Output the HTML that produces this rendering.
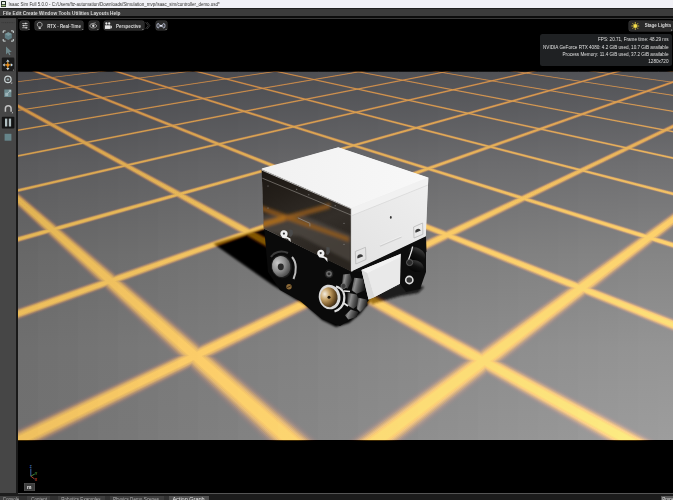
<!DOCTYPE html>
<html><head><meta charset="utf-8"><title>Isaac Sim</title>
<style>
html,body{margin:0;padding:0;background:#000;}
body{width:673px;height:500px;overflow:hidden;position:relative;font-family:"Liberation Sans",sans-serif;}
.abs{position:absolute;}
#scene{position:absolute;left:0;top:0;}
#title{left:0;top:0;width:673px;height:8.1px;background:#f1f1f6;}
#title .t{position:absolute;left:8.4px;top:1.33px;font-size:4.53px;line-height:6px;color:#303030;white-space:nowrap;}
#ticon{position:absolute;left:0.7px;top:0.7px;width:5.6px;height:6.3px;background:#1d2a20;border-radius:0.6px;}
#menu{left:0;top:8.1px;width:673px;height:8.2px;background:#3b3b3b;border-top:1.9px solid #202020;box-sizing:border-box;}
#menu .t{position:absolute;left:2.9px;top:0.1px;font-size:4.71px;line-height:6px;color:#dadada;white-space:nowrap;font-weight:bold;}
#menustrip{left:0;top:16.3px;width:673px;height:1.9px;background:#0c0c0c;}
#vtop{left:17.5px;top:17.6px;width:656px;height:0.7px;background:#383838;}
#ltool{left:0;top:18.2px;width:16.2px;height:474.7px;background:#464646;}
#lborder{left:16.2px;top:18.2px;width:1.5px;height:474.7px;background:#1a1a1a;}
.btn{position:absolute;background:#2a2a2a;border-radius:2px;box-shadow:0 0 0 0.5px #3c3c3c;}
.btxt{position:absolute;font-size:4.45px;line-height:6px;color:#dcdcdc;font-weight:bold;white-space:nowrap;}
#stats{left:540.3px;top:34.4px;width:131.9px;height:31.5px;background:#1f2123;border-radius:2.5px;}
#stats div{position:absolute;right:3.5px;font-size:4.62px;line-height:6px;color:#dedede;white-space:nowrap;text-align:right;}
#bstrip{left:0;top:492.8px;width:673px;height:7.2px;background:#1c1c1c;}
#bline{left:17.7px;top:492.6px;width:656px;height:1px;background:#555;}
.tab{position:absolute;top:495.9px;height:4.1px;background:#3e3e3e;overflow:hidden;}
.tab span{position:absolute;left:2px;top:0.4px;font-size:4.5px;line-height:6px;color:#a8a8a8;white-space:nowrap;}
.gl{mix-blend-mode:screen}
@supports (mix-blend-mode:plus-lighter){.gl{mix-blend-mode:plus-lighter}}
.gm{mix-blend-mode:multiply}

</style></head><body>
<svg id="scene" width="673" height="500" viewBox="0 0 673 500">
<defs>
<clipPath id="floorclip"><rect x="18" y="71.5" width="655" height="369"/></clipPath>
<linearGradient id="fl" x1="0" y1="0" x2="0" y2="1">
<stop offset="0" stop-color="#4d4d4d"/><stop offset="0.16" stop-color="#5a5a5a"/><stop offset="0.32" stop-color="#676767"/><stop offset="0.48" stop-color="#727272"/><stop offset="0.65" stop-color="#7b7b7b"/><stop offset="0.84" stop-color="#838383"/><stop offset="1" stop-color="#898989"/>
</linearGradient>
<linearGradient id="flh" x1="0" y1="0" x2="1" y2="0">
<stop offset="0" stop-color="#000" stop-opacity="0.08"/><stop offset="0.5" stop-color="#000" stop-opacity="0"/><stop offset="0.5" stop-color="#fff" stop-opacity="0"/><stop offset="1" stop-color="#fff" stop-opacity="0.04"/>
</linearGradient>
<filter id="sb" x="150" y="150" width="350" height="250" filterUnits="userSpaceOnUse"><feGaussianBlur stdDeviation="0.8"/></filter>
<filter id="rb" x="200" y="120" width="250" height="200" filterUnits="userSpaceOnUse"><feGaussianBlur stdDeviation="1.6"/></filter>
<clipPath id="lfclip"><polygon points="261.6,169.5 351.3,208.3 351,271.5 263.8,228.6"/></clipPath>
<linearGradient id="lf" gradientUnits="userSpaceOnUse" x1="262" y1="170" x2="300" y2="262"><stop offset="0" stop-color="#1b1713"/><stop offset="0.3" stop-color="#241f1a"/><stop offset="0.7" stop-color="#332e29"/><stop offset="1" stop-color="#2a2520"/></linearGradient>
<linearGradient id="rf" gradientUnits="userSpaceOnUse" x1="352" y1="272" x2="428" y2="178"><stop offset="0" stop-color="#e2e2e2"/><stop offset="1" stop-color="#efefef"/></linearGradient>
<linearGradient id="tf" gradientUnits="userSpaceOnUse" x1="262" y1="170" x2="428" y2="178"><stop offset="0" stop-color="#f1f1f1"/><stop offset="1" stop-color="#f8f8f8"/></linearGradient>
<linearGradient id="rol" x1="0" y1="0" x2="0" y2="1"><stop offset="0" stop-color="#3a3a3a"/><stop offset="0.5" stop-color="#111"/><stop offset="1" stop-color="#050505"/></linearGradient>
<linearGradient id="rol2" x1="0" y1="0" x2="1" y2="0.3"><stop offset="0" stop-color="#2a2a2a"/><stop offset="0.35" stop-color="#8d8d8d"/><stop offset="0.6" stop-color="#5a5a5a"/><stop offset="1" stop-color="#1c1c1c"/></linearGradient>
<radialGradient id="hub1" cx="0.3" cy="0.3" r="0.8"><stop offset="0" stop-color="#f2ece0"/><stop offset="0.35" stop-color="#c9a56a"/><stop offset="0.7" stop-color="#7a5a2c"/><stop offset="1" stop-color="#2a1e10"/></radialGradient>
<radialGradient id="hub2" cx="0.35" cy="0.3" r="0.8"><stop offset="0" stop-color="#c8c8c8"/><stop offset="0.5" stop-color="#8f8f8f"/><stop offset="1" stop-color="#3a3a3a"/></radialGradient>
<linearGradient id="L0" gradientUnits="userSpaceOnUse" x1="0" y1="71.5" x2="0" y2="440"><stop offset="0" stop-color="rgb(3,0,0)"/><stop offset="0.2" stop-color="rgb(3,0,0)"/><stop offset="0.38" stop-color="rgb(3,0,0)"/><stop offset="1" stop-color="rgb(3,0,0)"/></linearGradient><linearGradient id="L1" gradientUnits="userSpaceOnUse" x1="0" y1="71.5" x2="0" y2="440"><stop offset="0" stop-color="rgb(5,1,0)"/><stop offset="0.2" stop-color="rgb(5,1,0)"/><stop offset="0.38" stop-color="rgb(5,1,0)"/><stop offset="1" stop-color="rgb(5,1,0)"/></linearGradient><linearGradient id="L2" gradientUnits="userSpaceOnUse" x1="0" y1="71.5" x2="0" y2="440"><stop offset="0" stop-color="rgb(10,3,0)"/><stop offset="0.2" stop-color="rgb(9,3,0)"/><stop offset="0.38" stop-color="rgb(9,3,0)"/><stop offset="1" stop-color="rgb(9,3,0)"/></linearGradient><linearGradient id="L3" gradientUnits="userSpaceOnUse" x1="0" y1="71.5" x2="0" y2="440"><stop offset="0" stop-color="rgb(15,5,0)"/><stop offset="0.2" stop-color="rgb(14,6,0)"/><stop offset="0.38" stop-color="rgb(14,7,0)"/><stop offset="1" stop-color="rgb(14,7,0)"/></linearGradient><linearGradient id="L4" gradientUnits="userSpaceOnUse" x1="0" y1="71.5" x2="0" y2="440"><stop offset="0" stop-color="rgb(19,9,0)"/><stop offset="0.2" stop-color="rgb(19,10,0)"/><stop offset="0.38" stop-color="rgb(19,11,0)"/><stop offset="1" stop-color="rgb(19,11,0)"/></linearGradient><linearGradient id="L5" gradientUnits="userSpaceOnUse" x1="0" y1="71.5" x2="0" y2="440"><stop offset="0" stop-color="rgb(21,11,0)"/><stop offset="0.2" stop-color="rgb(20,13,0)"/><stop offset="0.38" stop-color="rgb(20,14,0)"/><stop offset="1" stop-color="rgb(20,14,0)"/></linearGradient><linearGradient id="L6" gradientUnits="userSpaceOnUse" x1="0" y1="71.5" x2="0" y2="440"><stop offset="0" stop-color="rgb(20,12,0)"/><stop offset="0.2" stop-color="rgb(20,14,0)"/><stop offset="0.38" stop-color="rgb(20,15,0)"/><stop offset="1" stop-color="rgb(20,15,0)"/></linearGradient><linearGradient id="L7" gradientUnits="userSpaceOnUse" x1="0" y1="71.5" x2="0" y2="440"><stop offset="0" stop-color="rgb(17,11,0)"/><stop offset="0.2" stop-color="rgb(16,13,0)"/><stop offset="0.38" stop-color="rgb(16,14,0)"/><stop offset="1" stop-color="rgb(16,14,0)"/></linearGradient><linearGradient id="L8" gradientUnits="userSpaceOnUse" x1="0" y1="71.5" x2="0" y2="440"><stop offset="0" stop-color="rgb(13,9,0)"/><stop offset="0.2" stop-color="rgb(13,11,0)"/><stop offset="0.38" stop-color="rgb(13,12,0)"/><stop offset="1" stop-color="rgb(13,12,0)"/></linearGradient><linearGradient id="L9" gradientUnits="userSpaceOnUse" x1="0" y1="71.5" x2="0" y2="440"><stop offset="0" stop-color="rgb(12,9,0)"/><stop offset="0.2" stop-color="rgb(12,10,0)"/><stop offset="0.38" stop-color="rgb(12,11,0)"/><stop offset="1" stop-color="rgb(12,11,0)"/></linearGradient><linearGradient id="F0" gradientUnits="userSpaceOnUse" x1="0" y1="71.5" x2="0" y2="440"><stop offset="0.00" stop-color="#45464a"/><stop offset="0.25" stop-color="#5b5b5d"/><stop offset="0.50" stop-color="#686868"/><stop offset="0.75" stop-color="#6f6f6f"/><stop offset="1.00" stop-color="#707070"/></linearGradient><linearGradient id="F1" gradientUnits="userSpaceOnUse" x1="0" y1="71.5" x2="0" y2="440"><stop offset="0.00" stop-color="#46474b"/><stop offset="0.25" stop-color="#5c5c5e"/><stop offset="0.50" stop-color="#6a6a6a"/><stop offset="0.75" stop-color="#717171"/><stop offset="1.00" stop-color="#727272"/></linearGradient><linearGradient id="F2" gradientUnits="userSpaceOnUse" x1="0" y1="71.5" x2="0" y2="440"><stop offset="0.00" stop-color="#46474b"/><stop offset="0.25" stop-color="#5d5d5f"/><stop offset="0.50" stop-color="#6b6b6b"/><stop offset="0.75" stop-color="#727272"/><stop offset="1.00" stop-color="#737373"/></linearGradient><linearGradient id="F3" gradientUnits="userSpaceOnUse" x1="0" y1="71.5" x2="0" y2="440"><stop offset="0.00" stop-color="#47484c"/><stop offset="0.25" stop-color="#5d5d5f"/><stop offset="0.50" stop-color="#6c6c6c"/><stop offset="0.75" stop-color="#747474"/><stop offset="1.00" stop-color="#757575"/></linearGradient><linearGradient id="F4" gradientUnits="userSpaceOnUse" x1="0" y1="71.5" x2="0" y2="440"><stop offset="0.00" stop-color="#48494d"/><stop offset="0.25" stop-color="#5e5e60"/><stop offset="0.50" stop-color="#6d6d6d"/><stop offset="0.75" stop-color="#757575"/><stop offset="1.00" stop-color="#777777"/></linearGradient><linearGradient id="F5" gradientUnits="userSpaceOnUse" x1="0" y1="71.5" x2="0" y2="440"><stop offset="0.00" stop-color="#48494d"/><stop offset="0.25" stop-color="#5f5f61"/><stop offset="0.50" stop-color="#6e6e6e"/><stop offset="0.75" stop-color="#777777"/><stop offset="1.00" stop-color="#787878"/></linearGradient><linearGradient id="F6" gradientUnits="userSpaceOnUse" x1="0" y1="71.5" x2="0" y2="440"><stop offset="0.00" stop-color="#494a4e"/><stop offset="0.25" stop-color="#606062"/><stop offset="0.50" stop-color="#6f6f6f"/><stop offset="0.75" stop-color="#787878"/><stop offset="1.00" stop-color="#7a7a7a"/></linearGradient><linearGradient id="F7" gradientUnits="userSpaceOnUse" x1="0" y1="71.5" x2="0" y2="440"><stop offset="0.00" stop-color="#4a4b4f"/><stop offset="0.25" stop-color="#616163"/><stop offset="0.50" stop-color="#717171"/><stop offset="0.75" stop-color="#797979"/><stop offset="1.00" stop-color="#7c7c7c"/></linearGradient><linearGradient id="F8" gradientUnits="userSpaceOnUse" x1="0" y1="71.5" x2="0" y2="440"><stop offset="0.00" stop-color="#4a4b4f"/><stop offset="0.25" stop-color="#626264"/><stop offset="0.50" stop-color="#727272"/><stop offset="0.75" stop-color="#7b7b7b"/><stop offset="1.00" stop-color="#7d7d7d"/></linearGradient><linearGradient id="F9" gradientUnits="userSpaceOnUse" x1="0" y1="71.5" x2="0" y2="440"><stop offset="0.00" stop-color="#4b4c50"/><stop offset="0.25" stop-color="#636365"/><stop offset="0.50" stop-color="#737373"/><stop offset="0.75" stop-color="#7c7c7c"/><stop offset="1.00" stop-color="#7f7f7f"/></linearGradient><linearGradient id="F10" gradientUnits="userSpaceOnUse" x1="0" y1="71.5" x2="0" y2="440"><stop offset="0.00" stop-color="#4b4c50"/><stop offset="0.25" stop-color="#636365"/><stop offset="0.50" stop-color="#747474"/><stop offset="0.75" stop-color="#7d7d7d"/><stop offset="1.00" stop-color="#808080"/></linearGradient><linearGradient id="F11" gradientUnits="userSpaceOnUse" x1="0" y1="71.5" x2="0" y2="440"><stop offset="0.00" stop-color="#4c4d51"/><stop offset="0.25" stop-color="#646466"/><stop offset="0.50" stop-color="#757575"/><stop offset="0.75" stop-color="#7f7f7f"/><stop offset="1.00" stop-color="#828282"/></linearGradient><linearGradient id="F12" gradientUnits="userSpaceOnUse" x1="0" y1="71.5" x2="0" y2="440"><stop offset="0.00" stop-color="#4c4d51"/><stop offset="0.25" stop-color="#656567"/><stop offset="0.50" stop-color="#767676"/><stop offset="0.75" stop-color="#808080"/><stop offset="1.00" stop-color="#838383"/></linearGradient><linearGradient id="F13" gradientUnits="userSpaceOnUse" x1="0" y1="71.5" x2="0" y2="440"><stop offset="0.00" stop-color="#4d4e52"/><stop offset="0.25" stop-color="#666668"/><stop offset="0.50" stop-color="#777777"/><stop offset="0.75" stop-color="#818181"/><stop offset="1.00" stop-color="#858585"/></linearGradient><linearGradient id="F14" gradientUnits="userSpaceOnUse" x1="0" y1="71.5" x2="0" y2="440"><stop offset="0.00" stop-color="#4d4e52"/><stop offset="0.25" stop-color="#666668"/><stop offset="0.50" stop-color="#787878"/><stop offset="0.75" stop-color="#828282"/><stop offset="1.00" stop-color="#868686"/></linearGradient><linearGradient id="F15" gradientUnits="userSpaceOnUse" x1="0" y1="71.5" x2="0" y2="440"><stop offset="0.00" stop-color="#4e4f53"/><stop offset="0.25" stop-color="#676769"/><stop offset="0.50" stop-color="#797979"/><stop offset="0.75" stop-color="#848484"/><stop offset="1.00" stop-color="#888888"/></linearGradient><linearGradient id="F16" gradientUnits="userSpaceOnUse" x1="0" y1="71.5" x2="0" y2="440"><stop offset="0.00" stop-color="#4e4f53"/><stop offset="0.25" stop-color="#68686a"/><stop offset="0.50" stop-color="#7a7a7a"/><stop offset="0.75" stop-color="#858585"/><stop offset="1.00" stop-color="#898989"/></linearGradient><linearGradient id="F17" gradientUnits="userSpaceOnUse" x1="0" y1="71.5" x2="0" y2="440"><stop offset="0.00" stop-color="#4e4f53"/><stop offset="0.25" stop-color="#68686a"/><stop offset="0.50" stop-color="#7a7a7a"/><stop offset="0.75" stop-color="#868686"/><stop offset="1.00" stop-color="#8b8b8b"/></linearGradient><linearGradient id="F18" gradientUnits="userSpaceOnUse" x1="0" y1="71.5" x2="0" y2="440"><stop offset="0.00" stop-color="#4f5054"/><stop offset="0.25" stop-color="#69696b"/><stop offset="0.50" stop-color="#7b7b7b"/><stop offset="0.75" stop-color="#878787"/><stop offset="1.00" stop-color="#8c8c8c"/></linearGradient><linearGradient id="F19" gradientUnits="userSpaceOnUse" x1="0" y1="71.5" x2="0" y2="440"><stop offset="0.00" stop-color="#4f5054"/><stop offset="0.25" stop-color="#69696b"/><stop offset="0.50" stop-color="#7c7c7c"/><stop offset="0.75" stop-color="#888888"/><stop offset="1.00" stop-color="#8d8d8d"/></linearGradient><linearGradient id="F20" gradientUnits="userSpaceOnUse" x1="0" y1="71.5" x2="0" y2="440"><stop offset="0.00" stop-color="#4f5054"/><stop offset="0.25" stop-color="#6a6a6c"/><stop offset="0.50" stop-color="#7d7d7d"/><stop offset="0.75" stop-color="#898989"/><stop offset="1.00" stop-color="#8f8f8f"/></linearGradient><linearGradient id="F21" gradientUnits="userSpaceOnUse" x1="0" y1="71.5" x2="0" y2="440"><stop offset="0.00" stop-color="#505155"/><stop offset="0.25" stop-color="#6b6b6d"/><stop offset="0.50" stop-color="#7e7e7e"/><stop offset="0.75" stop-color="#8a8a8a"/><stop offset="1.00" stop-color="#909090"/></linearGradient><linearGradient id="F22" gradientUnits="userSpaceOnUse" x1="0" y1="71.5" x2="0" y2="440"><stop offset="0.00" stop-color="#505155"/><stop offset="0.25" stop-color="#6b6b6d"/><stop offset="0.50" stop-color="#7f7f7f"/><stop offset="0.75" stop-color="#8b8b8b"/><stop offset="1.00" stop-color="#919191"/></linearGradient><linearGradient id="F23" gradientUnits="userSpaceOnUse" x1="0" y1="71.5" x2="0" y2="440"><stop offset="0.00" stop-color="#505155"/><stop offset="0.25" stop-color="#6c6c6e"/><stop offset="0.50" stop-color="#7f7f7f"/><stop offset="0.75" stop-color="#8c8c8c"/><stop offset="1.00" stop-color="#939393"/></linearGradient><linearGradient id="F24" gradientUnits="userSpaceOnUse" x1="0" y1="71.5" x2="0" y2="440"><stop offset="0.00" stop-color="#505155"/><stop offset="0.25" stop-color="#6c6c6e"/><stop offset="0.50" stop-color="#808080"/><stop offset="0.75" stop-color="#8d8d8d"/><stop offset="1.00" stop-color="#949494"/></linearGradient><linearGradient id="F25" gradientUnits="userSpaceOnUse" x1="0" y1="71.5" x2="0" y2="440"><stop offset="0.00" stop-color="#515256"/><stop offset="0.25" stop-color="#6c6c6e"/><stop offset="0.50" stop-color="#818181"/><stop offset="0.75" stop-color="#8e8e8e"/><stop offset="1.00" stop-color="#959595"/></linearGradient><linearGradient id="F26" gradientUnits="userSpaceOnUse" x1="0" y1="71.5" x2="0" y2="440"><stop offset="0.00" stop-color="#515256"/><stop offset="0.25" stop-color="#6d6d6f"/><stop offset="0.50" stop-color="#818181"/><stop offset="0.75" stop-color="#8f8f8f"/><stop offset="1.00" stop-color="#969696"/></linearGradient><linearGradient id="F27" gradientUnits="userSpaceOnUse" x1="0" y1="71.5" x2="0" y2="440"><stop offset="0.00" stop-color="#515256"/><stop offset="0.25" stop-color="#6d6d6f"/><stop offset="0.50" stop-color="#828282"/><stop offset="0.75" stop-color="#909090"/><stop offset="1.00" stop-color="#979797"/></linearGradient><linearGradient id="F28" gradientUnits="userSpaceOnUse" x1="0" y1="71.5" x2="0" y2="440"><stop offset="0.00" stop-color="#515256"/><stop offset="0.25" stop-color="#6e6e70"/><stop offset="0.50" stop-color="#838383"/><stop offset="0.75" stop-color="#919191"/><stop offset="1.00" stop-color="#999999"/></linearGradient><linearGradient id="F29" gradientUnits="userSpaceOnUse" x1="0" y1="71.5" x2="0" y2="440"><stop offset="0.00" stop-color="#515256"/><stop offset="0.25" stop-color="#6e6e70"/><stop offset="0.50" stop-color="#838383"/><stop offset="0.75" stop-color="#929292"/><stop offset="1.00" stop-color="#9a9a9a"/></linearGradient><linearGradient id="F30" gradientUnits="userSpaceOnUse" x1="0" y1="71.5" x2="0" y2="440"><stop offset="0.00" stop-color="#515256"/><stop offset="0.25" stop-color="#6e6e70"/><stop offset="0.50" stop-color="#848484"/><stop offset="0.75" stop-color="#939393"/><stop offset="1.00" stop-color="#9b9b9b"/></linearGradient><linearGradient id="F31" gradientUnits="userSpaceOnUse" x1="0" y1="71.5" x2="0" y2="440"><stop offset="0.00" stop-color="#515256"/><stop offset="0.25" stop-color="#6f6f71"/><stop offset="0.50" stop-color="#858585"/><stop offset="0.75" stop-color="#949494"/><stop offset="1.00" stop-color="#9c9c9c"/></linearGradient><linearGradient id="F32" gradientUnits="userSpaceOnUse" x1="0" y1="71.5" x2="0" y2="440"><stop offset="0.00" stop-color="#515256"/><stop offset="0.25" stop-color="#6f6f71"/><stop offset="0.50" stop-color="#858585"/><stop offset="0.75" stop-color="#949494"/><stop offset="1.00" stop-color="#9d9d9d"/></linearGradient></defs>
<g clip-path="url(#floorclip)">
<rect x="18" y="71.5" width="20.6" height="368.5" fill="url(#F0)"/><rect x="38" y="71.5" width="20.6" height="368.5" fill="url(#F1)"/><rect x="58" y="71.5" width="20.6" height="368.5" fill="url(#F2)"/><rect x="78" y="71.5" width="20.6" height="368.5" fill="url(#F3)"/><rect x="98" y="71.5" width="20.6" height="368.5" fill="url(#F4)"/><rect x="118" y="71.5" width="20.6" height="368.5" fill="url(#F5)"/><rect x="138" y="71.5" width="20.6" height="368.5" fill="url(#F6)"/><rect x="158" y="71.5" width="20.6" height="368.5" fill="url(#F7)"/><rect x="178" y="71.5" width="20.6" height="368.5" fill="url(#F8)"/><rect x="198" y="71.5" width="20.6" height="368.5" fill="url(#F9)"/><rect x="218" y="71.5" width="20.6" height="368.5" fill="url(#F10)"/><rect x="238" y="71.5" width="20.6" height="368.5" fill="url(#F11)"/><rect x="258" y="71.5" width="20.6" height="368.5" fill="url(#F12)"/><rect x="278" y="71.5" width="20.6" height="368.5" fill="url(#F13)"/><rect x="298" y="71.5" width="20.6" height="368.5" fill="url(#F14)"/><rect x="318" y="71.5" width="20.6" height="368.5" fill="url(#F15)"/><rect x="338" y="71.5" width="20.6" height="368.5" fill="url(#F16)"/><rect x="358" y="71.5" width="20.6" height="368.5" fill="url(#F17)"/><rect x="378" y="71.5" width="20.6" height="368.5" fill="url(#F18)"/><rect x="398" y="71.5" width="20.6" height="368.5" fill="url(#F19)"/><rect x="418" y="71.5" width="20.6" height="368.5" fill="url(#F20)"/><rect x="438" y="71.5" width="20.6" height="368.5" fill="url(#F21)"/><rect x="458" y="71.5" width="20.6" height="368.5" fill="url(#F22)"/><rect x="478" y="71.5" width="20.6" height="368.5" fill="url(#F23)"/><rect x="498" y="71.5" width="20.6" height="368.5" fill="url(#F24)"/><rect x="518" y="71.5" width="20.6" height="368.5" fill="url(#F25)"/><rect x="538" y="71.5" width="20.6" height="368.5" fill="url(#F26)"/><rect x="558" y="71.5" width="20.6" height="368.5" fill="url(#F27)"/><rect x="578" y="71.5" width="20.6" height="368.5" fill="url(#F28)"/><rect x="598" y="71.5" width="20.6" height="368.5" fill="url(#F29)"/><rect x="618" y="71.5" width="20.6" height="368.5" fill="url(#F30)"/><rect x="638" y="71.5" width="20.6" height="368.5" fill="url(#F31)"/><rect x="658" y="71.5" width="15.6" height="368.5" fill="url(#F32)"/>
<!-- shadow -->
<g filter="url(#sb)">
<polygon points="213.5,243.8 263.5,228.6 300,235 366,272 372,299 360,314 349,323 336,327 322,320 305,305 272.5,285" fill="#060606"/>
<polygon points="368,297 405,281 424,287 418,293 400,296 372,304" fill="#1a1a1a"/>
</g>
<g fill="url(#L0)" class="gl"><polygon points="-216.0,-6.2 -75.2,122.4 -26.4,166.9 16.4,207.3 79.3,266.8 180.8,362.8 345.9,518.8 481.2,645.1 738.8,885.3 761.6,811.2 514.1,603.4 379.8,490.7 209.1,349.2 101.0,259.7 32.9,203.2 -13.9,164.4 -64.8,120.8 -213.2,-6.3"/><polygon points="-23.0,86.3 42.2,122.7 122.0,167.3 193.0,207.8 297.4,267.4 465.9,363.6 739.9,519.9 963.4,646.4 1388.7,887.2 1359.5,812.9 967.1,604.7 754.1,491.8 484.6,350.0 314.1,260.3 206.7,203.7 132.7,164.8 51.4,121.2 -23.0,81.2"/><polygon points="-23.0,49.5 159.5,123.0 270.4,167.7 369.6,208.3 515.5,268.0 751.1,364.4 1134.0,521.0 1445.6,647.8 2038.6,889.0 1957.4,814.6 1420.0,606.0 1128.5,492.9 760.2,350.8 527.2,260.9 380.4,204.2 279.3,165.2 167.6,121.5 -23.0,46.8"/><polygon points="-19.2,30.0 276.8,123.4 418.8,168.1 546.3,208.8 733.7,268.6 1036.2,365.2 1528.0,522.2 1927.8,649.2 2688.5,890.9 2555.4,816.3 1873.0,607.3 1502.8,493.9 1035.8,351.5 740.4,261.5 554.1,204.7 426.0,165.6 283.9,121.8 -13.8,30.0"/><polygon points="32.8,30.0 394.2,123.7 567.2,168.6 722.9,209.3 951.8,269.3 1321.3,366.0 1922.0,523.3 2409.9,650.5 3338.3,892.7 3153.3,818.0 2326.0,608.6 1877.1,495.0 1311.3,352.3 953.5,262.1 727.8,205.2 572.6,166.1 400.1,122.1 38.1,30.0"/><polygon points="84.5,30.0 511.5,124.0 715.6,169.0 899.5,209.8 1169.9,269.9 1606.4,366.8 2316.1,524.4 2892.1,651.9 3988.2,894.6 3751.2,819.7 2778.9,609.9 2251.4,496.0 1586.9,353.1 1166.6,262.7 901.6,205.7 719.2,166.5 516.3,122.5 89.9,30.0"/><polygon points="136.1,30.0 628.8,124.4 864.0,169.4 1076.2,210.3 1388.1,270.5 1891.6,367.6 2710.1,525.5 3374.3,653.3 4638.1,896.4 4349.1,821.4 3231.9,611.2 2625.7,497.1 1862.5,353.9 1379.7,263.3 1075.3,206.2 865.9,166.9 632.6,122.8 141.4,30.0"/><polygon points="187.4,30.0 746.2,124.7 1012.4,169.8 1252.8,210.8 1606.2,271.1 2176.7,368.4 3104.2,526.6 3856.4,654.7 5288.0,898.3 4947.0,823.1 3684.8,612.5 3000.0,498.2 2138.0,354.7 1592.8,263.9 1249.0,206.7 1012.5,167.3 748.8,123.1 192.8,30.0"/><polygon points="238.6,30.0 863.5,125.0 1160.8,170.3 1429.4,211.3 1824.3,271.7 2461.8,369.3 3498.2,527.8 4338.6,656.0 5937.8,900.1 5544.9,824.8 4137.8,613.7 3374.3,499.2 2413.6,355.5 1805.9,264.5 1422.8,207.2 1159.1,167.7 865.0,123.5 243.9,30.0"/><polygon points="289.6,30.0 980.8,125.4 1309.2,170.7 1606.0,211.9 2042.4,272.4 2746.9,370.1 3892.2,528.9 4820.8,657.4 6587.7,902.0 6142.8,826.5 4590.8,615.0 3748.7,500.3 2689.2,356.3 2019.0,265.1 1596.5,207.7 1305.8,168.2 981.2,123.8 294.8,30.0"/><polygon points="340.3,30.0 1098.2,125.7 1457.5,171.1 1782.7,212.4 2260.6,273.0 3032.0,370.9 4286.3,530.0 5302.9,658.8 7237.6,903.8 6740.7,828.2 5043.7,616.3 4123.0,501.4 2964.8,357.0 2232.1,265.7 1770.2,208.2 1452.4,168.6 1097.5,124.1 345.6,30.0"/><polygon points="-6427.3,789.1 -4623.6,587.9 -3644.3,478.6 -2412.0,341.4 -1631.9,254.6 -1139.9,199.8 -801.3,162.1 -423.0,119.8 379.4,30.0 385.2,30.0 -424.6,121.4 -808.2,164.7 -1155.4,204.1 -1665.9,262.0 -2490.3,355.5 -3831.6,507.6 -4919.2,630.8 -6990.7,865.3"/><polygon points="-5801.4,790.8 -4149.2,589.2 -3252.1,479.7 -2123.2,342.2 -1408.5,255.2 -957.8,200.3 -647.6,162.5 -301.1,120.1 435.0,30.0 440.7,30.0 -301.5,121.8 -652.5,165.2 -970.0,204.6 -1437.0,262.7 -2191.0,356.4 -3417.8,508.8 -4412.7,632.2 -6307.7,867.3"/><polygon points="-5175.5,792.6 -3674.8,590.6 -2860.0,480.9 -1834.4,343.1 -1185.1,255.8 -775.7,200.8 -493.8,163.0 -179.2,120.5 490.3,30.0 496.0,30.0 -178.4,122.1 -496.8,165.6 -784.7,205.2 -1208.0,263.3 -1891.7,357.2 -3004.0,510.0 -3906.2,633.7 -5624.6,869.2"/><polygon points="-4549.6,794.4 -3200.4,591.9 -2467.9,482.0 -1545.6,343.9 -961.7,256.5 -593.5,201.4 -340.1,163.4 -57.4,120.8 545.3,30.0 551.1,30.0 -55.3,122.5 -341.1,166.0 -599.4,205.7 -979.1,264.0 -1592.4,358.1 -2590.1,511.2 -3399.7,635.1 -4941.5,871.1"/><polygon points="-3923.7,796.2 -2726.1,593.3 -2075.8,483.1 -1256.8,344.7 -738.4,257.1 -411.4,201.9 -186.3,163.8 64.5,121.2 600.2,30.0 605.9,30.0 67.7,122.8 -185.4,166.5 -414.1,206.2 -750.2,264.6 -1293.1,358.9 -2176.3,512.4 -2893.1,636.5 -4258.4,873.1"/><polygon points="-3297.8,798.0 -2251.7,594.6 -1683.7,484.2 -968.0,345.5 -515.0,257.7 -229.2,202.4 -32.6,164.3 186.4,121.5 654.8,30.0 660.5,30.0 190.8,123.2 -29.7,166.9 -228.7,206.7 -521.3,265.3 -993.8,359.8 -1762.5,513.5 -2386.6,638.0 -3575.4,875.0"/><polygon points="-2671.9,799.7 -1777.3,596.0 -1291.5,485.3 -679.2,346.3 -291.6,258.4 -47.1,202.9 121.2,164.7 308.3,121.8 709.2,30.0 714.0,30.2 313.9,123.5 126.0,167.4 -43.4,207.3 -292.4,265.9 -694.5,360.6 -1348.7,514.7 -1880.1,639.4 -2892.3,877.0"/><polygon points="-2046.0,801.5 -1302.9,597.3 -899.4,486.4 -390.4,347.2 -68.2,259.0 135.0,203.4 274.9,165.2 430.1,122.2 714.0,43.6 714.0,45.5 437.0,123.9 281.6,167.8 141.9,207.8 -63.5,266.6 -395.2,361.5 -934.8,515.9 -1373.6,640.9 -2209.2,878.9"/><polygon points="-1420.1,803.3 -828.5,598.7 -507.3,487.5 -101.6,348.0 155.2,259.7 317.2,203.9 428.7,165.6 552.0,122.5 714.0,66.0 714.0,69.0 560.1,124.2 437.3,168.3 327.3,208.3 165.5,267.2 -95.9,362.3 -521.0,517.1 -867.1,642.3 -1526.1,880.9"/><polygon points="-794.2,805.1 -354.1,600.0 -115.2,488.7 187.2,348.8 378.6,260.3 499.3,204.5 582.4,166.0 673.9,122.9 714.0,104.0 714.0,109.5 683.2,124.6 593.0,168.7 512.6,208.8 394.4,267.9 203.4,363.2 -107.2,518.2 -360.5,643.8 -843.1,882.8"/><polygon points="-168.3,806.9 120.3,601.4 276.9,489.8 476.0,349.6 602.0,260.9 681.5,205.0 736.2,166.5 795.8,123.2 966.0,-0.2 969.1,-0.1 806.3,124.9 748.7,169.1 697.9,209.4 623.3,268.5 502.8,364.0 306.6,519.4 146.0,645.2 -160.0,884.7"/></g>
<g fill="url(#L1)" class="gl"><polygon points="-215.9,-6.2 -74.8,122.3 -25.9,166.8 17.0,207.2 80.1,266.5 181.9,362.2 347.3,517.7 482.6,643.4 739.8,882.2 760.8,813.8 512.9,604.9 378.6,491.8 208.0,349.7 100.2,259.9 32.3,203.4 -14.4,164.5 -65.2,120.9 -213.3,-6.3"/><polygon points="-23.0,86.1 42.5,122.6 122.4,167.2 193.6,207.7 298.1,267.1 466.7,363.0 740.5,518.8 963.6,644.7 1387.5,884.1 1360.6,815.5 966.9,606.2 753.6,492.8 483.9,350.5 313.5,260.5 206.1,203.9 132.3,164.9 51.1,121.2 -23.0,81.4"/><polygon points="-23.0,49.4 159.8,123.0 270.7,167.6 370.1,208.2 516.0,267.7 751.4,363.8 1133.7,519.9 1444.5,646.1 2035.2,885.9 1960.3,817.2 1421.0,607.5 1128.7,493.9 759.9,351.3 526.8,261.2 380.0,204.4 279.0,165.3 167.3,121.5 -23.0,46.9"/><polygon points="-19.0,30.0 277.1,123.3 419.1,168.1 546.6,208.7 733.9,268.4 1036.2,364.7 1527.0,521.0 1925.5,647.5 2682.9,887.8 2560.1,818.9 1875.0,608.8 1503.7,495.0 1035.8,352.1 740.1,261.8 553.8,204.9 425.7,165.7 283.6,121.9 -14.0,30.0"/><polygon points="33.0,30.0 394.4,123.6 567.4,168.5 723.1,209.2 951.9,269.0 1320.9,365.5 1920.2,522.1 2406.5,648.8 3330.6,889.6 3159.8,820.6 2329.0,610.1 1878.7,496.0 1311.7,352.8 953.4,262.4 727.7,205.4 572.4,166.2 399.9,122.2 37.9,30.0"/><polygon points="84.7,30.0 511.7,124.0 715.7,168.9 899.6,209.7 1169.8,269.6 1605.7,366.3 2313.5,523.3 2887.5,650.2 3978.3,891.5 3759.6,822.3 2783.0,611.4 2253.8,497.1 1587.6,353.6 1166.7,263.0 901.5,205.9 719.1,166.6 516.1,122.5 89.7,30.0"/><polygon points="136.3,30.0 629.0,124.3 864.0,169.3 1076.1,210.2 1387.7,270.2 1890.4,367.1 2706.7,524.4 3368.4,651.6 4626.0,893.3 4359.3,824.0 3237.0,612.7 2628.8,498.2 1863.6,354.4 1380.0,263.6 1075.3,206.4 865.8,167.0 632.4,122.9 141.2,30.0"/><polygon points="187.6,30.0 746.3,124.7 1012.4,169.7 1252.6,210.7 1605.7,270.8 2175.1,367.9 3100.0,525.5 3849.4,652.9 5273.8,895.1 4959.1,825.7 3691.0,614.0 3003.8,499.2 2139.5,355.2 1593.3,264.2 1249.2,206.8 1012.5,167.4 748.7,123.2 192.6,30.0"/><polygon points="238.8,30.0 863.6,125.0 1160.7,170.2 1429.2,211.2 1823.6,271.5 2459.9,368.7 3493.2,526.6 4330.4,654.3 5921.5,897.0 5558.9,827.5 4145.1,615.3 3378.9,500.3 2415.4,356.0 1806.6,264.8 1423.0,207.3 1159.2,167.8 865.0,123.5 243.7,30.0"/><polygon points="289.8,30.0 980.8,125.3 1309.0,170.6 1605.7,211.7 2041.5,272.1 2744.6,369.5 3886.4,527.7 4811.4,655.7 6569.2,898.8 6158.6,829.2 4599.1,616.6 3753.9,501.4 2691.3,356.8 2019.9,265.4 1596.8,207.8 1305.9,168.2 981.2,123.9 294.6,30.0"/><polygon points="340.5,30.0 1098.1,125.7 1457.3,171.0 1782.2,212.2 2259.5,272.7 3029.4,370.3 4279.7,528.9 5292.3,657.0 7216.9,900.7 6758.4,830.9 5053.1,617.9 4128.9,502.4 2967.3,357.6 2233.2,266.0 1770.7,208.3 1452.6,168.7 1097.5,124.2 345.4,30.0"/><polygon points="-6447.2,791.8 -4634.3,589.4 -3651.1,479.7 -2414.9,341.9 -1633.2,254.8 -1140.5,200.0 -801.6,162.2 -423.1,119.8 379.7,30.0 385.0,30.0 -424.6,121.4 -807.9,164.6 -1154.8,203.9 -1664.5,261.7 -2487.2,354.9 -3824.0,506.5 -4907.1,629.0 -6967.2,862.1"/><polygon points="-5819.3,793.5 -4158.7,590.8 -3258.2,480.8 -2125.7,342.8 -1409.6,255.5 -958.3,200.5 -647.8,162.6 -301.1,120.2 435.2,30.0 440.5,30.0 -301.5,121.7 -652.3,165.1 -969.6,204.5 -1435.8,262.4 -2188.3,355.8 -3411.1,507.6 -4401.9,630.5 -6286.5,864.1"/><polygon points="-5191.4,795.3 -3683.2,592.1 -2865.3,481.9 -1836.5,343.6 -1186.0,256.1 -776.0,201.0 -494.0,163.1 -179.2,120.5 490.5,30.0 495.8,30.0 -178.5,122.1 -496.7,165.5 -784.4,205.0 -1207.1,263.0 -1889.4,356.6 -2998.1,508.8 -3896.7,631.9 -5605.8,866.0"/><polygon points="-4563.4,797.1 -3207.6,593.5 -2472.4,483.0 -1547.3,344.4 -962.4,256.8 -593.7,201.5 -340.1,163.5 -57.3,120.9 545.6,30.0 550.8,30.0 -55.4,122.4 -341.1,165.9 -599.2,205.5 -978.4,263.7 -1590.5,357.5 -2585.2,510.0 -3391.5,633.3 -4925.1,867.9"/><polygon points="-3935.5,798.9 -2732.1,594.8 -2079.5,484.2 -1258.1,345.2 -738.8,257.4 -411.5,202.0 -186.3,163.9 64.6,121.2 600.4,30.0 605.7,30.0 67.6,122.8 -185.5,166.4 -413.9,206.0 -749.7,264.3 -1291.6,358.3 -2172.2,511.2 -2886.3,634.8 -4244.4,869.9"/><polygon points="-3307.6,800.7 -2256.5,596.2 -1686.5,485.3 -968.9,346.1 -515.2,258.0 -229.2,202.6 -32.5,164.4 186.6,121.6 655.0,30.0 660.2,30.0 190.7,123.1 -29.8,166.8 -228.7,206.6 -521.0,265.0 -992.7,359.2 -1759.3,512.3 -2381.1,636.2 -3563.7,871.8"/><polygon points="-2679.7,802.5 -1781.0,597.5 -1293.6,486.4 -679.8,346.9 -291.6,258.7 -47.0,203.1 121.3,164.8 308.5,121.9 709.4,30.0 714.0,30.1 313.7,123.5 125.8,167.3 -43.5,207.1 -292.3,265.6 -693.9,360.0 -1346.4,513.5 -1875.9,637.6 -2883.1,873.7"/><polygon points="-2051.8,804.3 -1305.4,598.9 -900.7,487.5 -390.6,347.7 -68.0,259.3 135.3,203.6 275.2,165.3 430.4,122.3 714.0,43.7 714.0,45.5 436.8,123.8 281.4,167.7 141.7,207.6 -63.6,266.3 -395.0,360.9 -933.4,514.7 -1370.7,639.1 -2202.4,875.7"/><polygon points="-1423.9,806.0 -829.9,600.2 -507.8,488.6 -101.4,348.5 155.6,259.9 317.6,204.1 429.0,165.7 552.3,122.6 714.0,66.1 714.0,68.9 559.8,124.2 437.0,168.2 326.9,208.1 165.1,266.9 -96.1,361.7 -520.5,515.9 -865.5,640.5 -1521.7,877.6"/><polygon points="-795.9,807.8 -354.4,601.6 -114.9,489.7 187.8,349.3 379.2,260.6 499.8,204.6 582.8,166.1 674.3,123.0 714.0,104.2 714.0,109.3 682.9,124.5 592.6,168.6 512.1,208.7 393.8,267.6 202.8,362.6 -107.5,517.0 -360.3,642.0 -841.0,879.6"/><polygon points="-168.0,809.6 121.2,602.9 278.0,490.9 477.0,350.2 602.8,261.2 682.1,205.1 736.6,166.6 796.2,123.3 966.1,-0.2 969.0,-0.1 805.9,124.9 748.2,169.0 697.3,209.2 622.5,268.2 501.7,363.4 305.4,518.2 144.9,643.4 -160.3,881.5"/></g>
<g fill="url(#L2)" class="gl"><polygon points="-215.8,-6.2 -74.4,122.3 -25.4,166.7 17.7,207.0 81.0,266.2 183.1,361.7 348.6,516.5 483.9,641.7 740.7,879.2 760.0,816.5 511.7,606.5 377.3,492.8 207.0,350.2 99.4,260.2 31.7,203.5 -14.9,164.6 -65.6,120.9 -213.5,-6.3"/><polygon points="-23.0,85.9 42.9,122.6 122.8,167.1 194.1,207.5 298.7,266.8 467.4,362.5 741.1,517.7 963.7,643.0 1386.3,881.0 1361.6,818.2 966.8,607.8 753.1,493.9 483.2,351.0 312.9,260.8 205.6,204.0 131.9,165.0 50.7,121.3 -23.0,81.6"/><polygon points="-23.0,49.3 160.1,122.9 271.1,167.5 370.5,208.0 516.5,267.5 751.8,363.3 1133.5,518.8 1443.5,644.4 2031.8,882.8 1963.2,819.9 1421.9,609.0 1128.9,494.9 759.5,351.8 526.4,261.4 379.6,204.5 278.7,165.4 167.0,121.6 -23.0,47.0"/><polygon points="-18.8,30.0 277.4,123.3 419.3,168.0 546.9,208.5 734.2,268.1 1036.2,364.1 1526.0,519.9 1923.3,645.8 2677.4,884.7 2564.8,821.6 1877.0,610.3 1504.6,496.0 1035.8,352.6 739.9,262.0 553.5,205.0 425.4,165.8 283.3,121.9 -14.2,30.0"/><polygon points="33.2,30.0 394.6,123.6 567.6,168.4 723.3,209.0 951.9,268.7 1320.5,364.9 1918.4,521.0 2403.1,647.1 3323.0,886.5 3166.4,823.3 2332.0,611.6 1880.4,497.1 1312.1,353.4 953.3,262.6 727.5,205.5 572.2,166.3 399.6,122.3 37.7,30.0"/><polygon points="84.9,30.0 511.9,123.9 715.9,168.8 899.7,209.5 1169.7,269.3 1604.9,365.7 2310.9,522.1 2882.9,648.5 3968.5,888.4 3768.1,825.0 2787.1,612.9 2256.1,498.1 1588.4,354.1 1166.8,263.2 901.4,206.0 719.0,166.7 516.0,122.6 89.5,30.0"/><polygon points="136.5,30.0 629.1,124.3 864.1,169.2 1076.1,210.0 1387.4,269.9 1889.2,366.5 2703.3,523.2 3362.7,649.9 4614.1,890.2 4369.7,826.7 3242.2,614.2 2631.9,499.2 1864.6,354.9 1380.3,263.9 1075.4,206.5 865.7,167.1 632.3,122.9 141.0,30.0"/><polygon points="187.9,30.0 746.4,124.6 1012.4,169.6 1252.5,210.5 1605.1,270.6 2173.6,367.3 3095.8,524.4 3842.4,651.2 5259.6,892.0 4971.3,828.4 3697.3,615.5 3007.7,500.3 2140.9,355.7 1593.8,264.5 1249.3,207.0 1012.5,167.5 748.6,123.3 192.4,30.0"/><polygon points="239.0,30.0 863.6,124.9 1160.6,170.1 1428.9,211.0 1822.9,271.2 2458.0,368.2 3488.2,525.5 4322.2,652.6 5905.2,893.9 5572.9,830.1 4152.4,616.8 3383.4,501.3 2417.2,356.5 1807.3,265.1 1423.3,207.5 1159.3,167.9 864.9,123.6 243.5,30.0"/><polygon points="290.0,30.0 980.9,125.3 1308.9,170.5 1605.3,211.5 2040.6,271.8 2742.3,369.0 3880.7,526.6 4802.0,654.0 6550.8,895.7 6174.5,831.9 4607.5,618.1 3759.2,502.4 2693.5,357.3 2020.8,265.7 1597.2,208.0 1306.0,168.3 981.2,123.9 294.4,30.0"/><polygon points="340.7,30.0 1098.1,125.6 1457.1,170.9 1781.7,212.0 2258.3,272.4 3026.7,369.8 4273.1,527.7 5281.8,655.3 7196.3,897.5 6776.1,833.6 5062.5,619.4 4135.0,503.5 2969.8,358.1 2234.2,266.3 1771.2,208.5 1452.8,168.8 1097.5,124.3 345.2,30.0"/><polygon points="-6467.3,794.5 -4645.0,591.0 -3658.0,480.7 -2417.8,342.5 -1634.5,255.1 -1141.1,200.1 -801.9,162.3 -423.1,119.9 379.9,30.0 384.8,30.0 -424.5,121.3 -807.7,164.5 -1154.2,203.8 -1663.2,261.4 -2484.1,354.4 -3816.5,505.3 -4895.1,627.3 -6943.8,859.0"/><polygon points="-5837.3,796.3 -4168.3,592.3 -3264.3,481.9 -2128.2,343.3 -1410.7,255.8 -958.7,200.6 -648.0,162.7 -301.1,120.2 435.4,30.0 440.3,30.0 -301.5,121.6 -652.1,165.0 -969.1,204.3 -1434.7,262.1 -2185.6,355.2 -3404.4,506.5 -4391.2,628.7 -6265.4,860.9"/><polygon points="-5207.3,798.1 -3691.6,593.7 -2870.6,483.0 -1838.6,344.1 -1186.9,256.4 -776.4,201.2 -494.1,163.2 -179.2,120.6 490.7,30.0 495.6,30.0 -178.5,122.0 -496.6,165.4 -784.0,204.8 -1206.2,262.7 -1887.1,356.1 -2992.3,507.6 -3887.3,630.1 -5587.1,862.8"/><polygon points="-4577.4,799.8 -3214.9,595.0 -2476.9,484.1 -1549.1,344.9 -963.1,257.0 -594.0,201.7 -340.2,163.6 -57.2,120.9 545.8,30.0 550.6,30.0 -55.5,122.3 -341.0,165.8 -598.9,205.3 -977.8,263.4 -1588.7,356.9 -2580.3,508.8 -3383.4,631.6 -4908.8,864.7"/><polygon points="-3947.4,801.6 -2738.2,596.4 -2083.1,485.2 -1259.5,345.8 -739.2,257.7 -411.6,202.2 -186.3,164.0 64.8,121.3 600.6,30.0 605.4,30.0 67.5,122.7 -185.5,166.3 -413.8,205.9 -749.3,264.0 -1290.2,357.8 -2168.2,510.0 -2879.5,633.0 -4230.5,866.7"/><polygon points="-3317.5,803.4 -2261.4,597.8 -1689.4,486.3 -969.9,346.6 -515.4,258.3 -229.2,202.7 -32.4,164.5 186.7,121.6 655.2,30.0 660.0,30.0 190.5,123.0 -30.0,166.7 -228.8,206.4 -520.8,264.7 -991.7,358.6 -1756.1,511.2 -2375.6,634.4 -3552.2,868.6"/><polygon points="-2687.5,805.2 -1784.7,599.1 -1295.7,487.5 -680.3,347.4 -291.6,258.9 -46.8,203.2 121.5,164.9 308.7,122.0 709.6,30.0 714.0,30.1 313.5,123.4 125.6,167.2 -43.7,206.9 -292.3,265.3 -693.3,359.5 -1344.0,512.3 -1871.7,635.9 -2873.9,870.5"/><polygon points="-2057.6,807.0 -1308.0,600.5 -902.0,488.6 -390.7,348.2 -67.8,259.6 135.6,203.8 275.4,165.4 430.7,122.3 714.0,43.8 714.0,45.4 436.5,123.7 281.1,167.6 141.4,207.4 -63.8,266.0 -394.8,360.3 -932.0,513.5 -1367.8,637.3 -2195.6,872.5"/><polygon points="-1427.6,808.8 -831.3,601.8 -508.3,489.7 -101.2,349.1 156.0,260.2 317.9,204.3 429.3,165.8 552.6,122.7 714.0,66.2 714.0,68.8 559.5,124.1 436.7,168.1 326.5,208.0 164.7,266.6 -96.3,361.2 -519.9,514.7 -863.9,638.7 -1517.3,874.4"/><polygon points="-797.7,810.6 -354.6,603.2 -114.6,490.8 188.4,349.9 379.8,260.9 500.3,204.8 583.2,166.2 674.6,123.0 714.0,104.4 714.0,109.1 682.5,124.4 592.2,168.5 511.6,208.5 393.1,267.3 202.2,362.0 -107.8,515.8 -360.0,640.2 -839.0,876.3"/><polygon points="-167.7,812.4 122.1,604.5 279.1,491.9 478.0,350.7 603.6,261.5 682.7,205.3 737.1,166.7 796.6,123.4 966.3,-0.2 968.9,-0.1 805.5,124.8 747.7,168.9 696.7,209.0 621.6,267.9 500.6,362.9 304.2,517.0 143.9,641.6 -160.7,878.3"/></g>
<g fill="url(#L3)" class="gl"><polygon points="-215.7,-6.2 -74.0,122.2 -24.9,166.6 18.3,206.8 81.8,265.9 184.2,361.1 350.0,515.4 485.3,640.0 741.7,876.1 759.2,819.1 510.5,608.0 376.1,493.8 205.9,350.7 98.6,260.5 31.1,203.7 -15.3,164.7 -66.0,121.0 -213.6,-6.3"/><polygon points="-23.0,85.7 43.2,122.5 123.2,167.0 194.6,207.4 299.4,266.6 468.2,362.0 741.6,516.5 963.9,641.3 1385.1,878.0 1362.7,820.8 966.7,609.3 752.6,494.9 482.5,351.5 312.3,261.1 205.1,204.2 131.5,165.1 50.4,121.3 -23.0,81.8"/><polygon points="-23.0,49.2 160.5,122.9 271.4,167.4 370.9,207.9 516.9,267.2 752.1,362.8 1133.3,517.6 1442.5,642.7 2028.5,879.8 1966.1,822.6 1422.8,610.6 1129.1,496.0 759.2,352.3 525.9,261.7 379.2,204.7 278.3,165.5 166.7,121.7 -23.0,47.1"/><polygon points="-18.6,30.0 277.7,123.2 419.6,167.9 547.2,208.4 734.5,267.8 1036.1,363.6 1525.0,518.8 1921.1,644.1 2671.9,881.6 2569.6,824.3 1879.0,611.9 1505.5,497.0 1035.8,353.1 739.6,262.3 553.2,205.2 425.2,165.9 283.1,122.0 -14.4,30.0"/><polygon points="33.4,30.0 394.9,123.5 567.8,168.3 723.5,208.9 952.0,268.4 1320.1,364.4 1916.6,519.9 2399.7,645.4 3315.4,883.4 3173.1,826.0 2335.1,613.2 1882.0,498.1 1312.5,353.9 953.3,262.9 727.3,205.7 572.0,166.4 399.4,122.3 37.5,30.0"/><polygon points="85.1,30.0 512.1,123.9 716.0,168.7 899.8,209.4 1169.5,269.0 1604.1,365.2 2308.3,521.0 2878.3,646.8 3958.8,885.3 3776.6,827.7 2791.3,614.5 2258.5,499.2 1589.1,354.7 1166.9,263.5 901.3,206.2 718.8,166.8 515.8,122.7 89.3,30.0"/><polygon points="136.7,30.0 629.3,124.2 864.2,169.1 1076.1,209.9 1387.1,269.7 1888.1,366.0 2699.9,522.1 3356.9,648.2 4602.2,887.1 4380.1,829.4 3247.4,615.8 2635.0,500.2 1865.7,355.4 1380.6,264.1 1075.4,206.7 865.7,167.2 632.1,123.0 140.8,30.0"/><polygon points="188.1,30.0 746.5,124.5 1012.4,169.5 1252.3,210.4 1604.6,270.3 2172.1,366.8 3091.6,523.2 3835.5,649.5 5245.6,888.9 4983.5,831.1 3703.6,617.1 3011.5,501.3 2142.4,356.2 1594.3,264.7 1249.5,207.2 1012.5,167.6 748.5,123.3 192.2,30.0"/><polygon points="239.2,30.0 863.7,124.9 1160.6,170.0 1428.6,210.9 1822.1,270.9 2456.1,367.6 3483.3,524.3 4314.1,650.9 5889.1,890.8 5587.0,832.9 4159.7,618.4 3388.0,502.4 2419.0,357.0 1808.0,265.3 1423.5,207.7 1159.3,168.0 864.8,123.7 243.3,30.0"/><polygon points="290.2,30.0 980.9,125.2 1308.8,170.4 1604.9,211.4 2039.7,271.5 2740.1,368.4 3874.9,525.4 4792.7,652.2 6532.5,892.6 6190.5,834.6 4615.9,619.7 3764.5,503.5 2695.7,357.8 2021.6,265.9 1597.6,208.2 1306.2,168.4 981.2,124.0 294.2,30.0"/><polygon points="340.9,30.0 1098.1,125.5 1456.9,170.8 1781.2,211.9 2257.2,272.1 3024.0,369.2 4266.6,526.6 5271.3,653.6 7175.9,894.4 6794.0,836.3 5072.0,621.0 4141.0,504.5 2972.3,358.6 2235.3,266.6 1771.6,208.6 1453.0,168.9 1097.5,124.3 345.0,30.0"/><polygon points="-6487.4,797.2 -4655.8,592.5 -3664.9,481.8 -2420.7,343.0 -1635.8,255.4 -1141.7,200.3 -802.1,162.4 -423.2,120.0 380.1,30.0 384.6,30.0 -424.4,121.2 -807.4,164.4 -1153.6,203.6 -1661.9,261.1 -2481.0,353.8 -3808.9,504.1 -4883.1,625.5 -6920.5,855.8"/><polygon points="-5855.4,799.0 -4177.9,593.9 -3270.4,482.9 -2130.7,343.8 -1411.7,256.0 -959.2,200.8 -648.2,162.8 -301.2,120.3 435.6,30.0 440.1,30.0 -301.5,121.6 -651.9,164.9 -968.6,204.1 -1433.6,261.8 -2182.9,354.7 -3397.7,505.3 -4380.5,627.0 -6244.6,857.7"/><polygon points="-5223.4,800.8 -3700.0,595.3 -2875.9,484.1 -1840.8,344.6 -1187.7,256.7 -776.7,201.3 -494.2,163.3 -179.1,120.7 490.9,30.0 495.4,30.0 -178.5,121.9 -496.5,165.3 -783.7,204.6 -1205.3,262.4 -1884.9,355.5 -2986.5,506.5 -3877.9,628.4 -5568.6,859.7"/><polygon points="-4591.4,802.6 -3222.1,596.6 -2481.4,485.2 -1550.8,345.5 -963.7,257.3 -594.2,201.8 -340.2,163.7 -57.1,121.0 546.0,30.0 550.4,30.0 -55.6,122.3 -341.0,165.7 -598.7,205.2 -977.1,263.1 -1586.8,356.4 -2575.3,507.6 -3375.3,629.8 -4892.7,861.6"/><polygon points="-3959.4,804.4 -2744.2,598.0 -2086.8,486.3 -1260.8,346.3 -739.7,258.0 -411.7,202.4 -186.2,164.1 64.9,121.3 600.8,30.0 605.2,30.0 67.4,122.6 -185.5,166.2 -413.7,205.7 -748.8,263.7 -1288.8,357.2 -2164.1,508.8 -2872.7,631.3 -4216.7,863.5"/><polygon points="-3327.4,806.2 -2266.4,599.3 -1692.3,487.4 -970.9,347.1 -515.7,258.6 -229.2,202.9 -32.3,164.6 186.9,121.7 655.4,30.0 659.8,30.0 190.3,123.0 -30.1,166.6 -228.8,206.2 -520.5,264.4 -990.7,358.1 -1753.0,510.0 -2370.1,632.7 -3540.8,865.4"/><polygon points="-2695.4,808.0 -1788.5,600.7 -1297.8,488.5 -680.9,347.9 -291.7,259.2 -46.7,203.4 121.7,165.0 308.9,122.0 709.8,30.0 714.0,30.0 313.3,123.3 125.4,167.1 -43.8,206.8 -292.3,265.0 -692.6,358.9 -1341.8,511.1 -1867.5,634.1 -2864.8,867.4"/><polygon points="-2063.4,809.8 -1310.6,602.1 -903.3,489.7 -390.9,348.8 -67.6,259.9 135.8,203.9 275.7,165.5 430.9,122.4 714.0,43.9 714.0,45.3 436.2,123.7 280.9,167.5 141.1,207.3 -64.0,265.7 -394.6,359.8 -930.6,512.3 -1364.9,635.5 -2188.9,869.3"/><polygon points="-1431.4,811.6 -832.7,603.4 -508.8,490.8 -101.0,349.6 156.4,260.5 318.3,204.4 429.6,165.9 553.0,122.7 714.0,66.4 714.0,68.7 559.2,124.0 436.3,168.0 326.1,207.8 164.3,266.3 -96.5,360.6 -519.4,513.5 -862.4,637.0 -1512.9,871.2"/><polygon points="-799.4,813.4 -354.8,604.8 -114.3,491.9 189.0,350.4 380.4,261.1 500.8,205.0 583.6,166.3 675.0,123.1 714.0,104.6 714.0,108.8 682.1,124.4 591.8,168.4 511.1,208.3 392.5,267.0 201.5,361.5 -108.2,514.7 -359.8,638.4 -837.0,873.1"/><polygon points="-167.4,815.2 123.1,606.1 280.2,493.0 479.0,351.2 604.4,261.8 683.3,205.5 737.6,166.8 797.0,123.4 966.4,-0.2 968.7,-0.1 805.1,124.7 747.2,168.8 696.0,208.9 620.8,267.6 499.6,362.3 303.0,515.8 142.8,639.8 -161.0,875.0"/></g>
<g fill="url(#L4)" class="gl"><polygon points="-215.6,-6.2 -73.6,122.1 -24.5,166.5 19.0,206.7 82.7,265.7 185.3,360.6 351.3,514.3 486.6,638.3 742.6,873.1 758.4,821.8 509.3,609.5 374.8,494.9 204.8,351.2 97.8,260.7 30.4,203.9 -15.8,164.8 -66.4,121.1 -213.7,-6.3"/><polygon points="-23.0,85.5 43.6,122.5 123.7,166.9 195.1,207.2 300.0,266.3 468.9,361.4 742.2,515.4 964.0,639.7 1383.9,874.9 1363.7,823.5 966.5,610.8 752.0,495.9 481.8,352.0 311.6,261.4 204.6,204.3 131.1,165.2 50.0,121.4 -23.0,82.0"/><polygon points="-23.0,49.1 160.8,122.8 271.8,167.3 371.3,207.7 517.4,266.9 752.5,362.2 1133.1,516.5 1441.4,641.0 2025.2,876.7 1969.1,825.2 1423.8,612.1 1129.3,497.0 758.8,352.8 525.5,262.0 378.8,204.8 278.0,165.6 166.4,121.7 -23.0,47.2"/><polygon points="-18.4,30.0 277.9,123.1 419.9,167.8 547.5,208.2 734.7,267.5 1036.1,363.0 1524.0,517.6 1918.9,642.4 2666.5,878.6 2574.4,827.0 1881.0,613.4 1506.5,498.1 1035.8,353.6 739.3,262.6 552.9,205.3 424.9,166.0 282.8,122.1 -14.6,30.0"/><polygon points="33.6,30.0 395.1,123.5 568.0,168.2 723.7,208.7 952.1,268.1 1319.7,363.8 1914.8,518.7 2396.3,643.7 3307.8,880.4 3179.8,828.7 2338.2,614.7 1883.7,499.2 1312.8,354.4 953.2,263.2 727.1,205.8 571.8,166.4 399.2,122.4 37.3,30.0"/><polygon points="85.3,30.0 512.2,123.8 716.1,168.6 899.8,209.2 1169.4,268.8 1603.3,364.6 2305.7,519.8 2873.7,645.1 3949.1,882.2 3785.1,830.4 2795.4,616.0 2260.9,500.2 1589.8,355.2 1167.1,263.8 901.3,206.3 718.7,166.9 515.6,122.7 89.1,30.0"/><polygon points="136.9,30.0 629.4,124.1 864.3,169.0 1076.0,209.7 1386.7,269.4 1886.9,365.5 2696.6,521.0 3351.2,646.5 4590.4,884.0 4390.5,832.1 3252.6,617.3 2638.1,501.3 1866.8,356.0 1380.9,264.4 1075.4,206.8 865.6,167.3 632.0,123.0 140.6,30.0"/><polygon points="188.3,30.0 746.6,124.5 1012.4,169.4 1252.2,210.2 1604.1,270.0 2170.6,366.3 3087.4,522.1 3828.6,647.8 5231.7,885.9 4995.9,833.9 3709.9,618.6 3015.4,502.4 2143.8,356.7 1594.8,265.0 1249.6,207.3 1012.5,167.7 748.4,123.4 192.0,30.0"/><polygon points="239.4,30.0 863.7,124.8 1160.5,169.9 1428.4,210.7 1821.4,270.6 2454.2,367.1 3478.3,523.2 4306.0,649.2 5873.0,887.7 5601.2,835.6 4167.1,619.9 3392.6,503.4 2420.8,357.5 1808.7,265.6 1423.8,207.8 1159.4,168.1 864.8,123.7 243.1,30.0"/><polygon points="290.4,30.0 980.9,125.1 1308.6,170.3 1604.6,211.2 2038.8,271.2 2737.8,367.9 3869.2,524.3 4783.5,650.5 6514.3,889.5 6206.6,837.3 4624.3,621.2 3769.8,504.5 2697.8,358.3 2022.5,266.2 1597.9,208.3 1306.3,168.5 981.2,124.0 294.0,30.0"/><polygon points="341.1,30.0 1098.1,125.5 1456.7,170.7 1780.7,211.7 2256.1,271.9 3021.4,368.7 4260.1,525.4 5260.9,651.9 7155.6,891.3 6811.9,839.0 5081.5,622.5 4147.0,505.6 2974.8,359.1 2236.4,266.8 1772.1,208.8 1453.2,169.0 1097.6,124.4 344.8,30.0"/><polygon points="-6507.7,799.9 -4666.6,594.1 -3671.8,482.9 -2423.7,343.5 -1637.0,255.7 -1142.3,200.4 -802.4,162.5 -423.2,120.0 380.3,30.0 384.3,30.0 -424.4,121.2 -807.1,164.3 -1153.0,203.4 -1660.5,260.8 -2477.9,353.3 -3801.4,503.0 -4871.2,623.8 -6897.4,852.7"/><polygon points="-5873.7,801.8 -4187.6,595.5 -3276.5,484.0 -2133.3,344.3 -1412.8,256.3 -959.7,201.0 -648.3,162.9 -301.2,120.4 435.9,30.0 439.8,30.0 -301.5,121.5 -651.7,164.8 -968.1,204.0 -1432.5,261.5 -2180.2,354.1 -3391.1,504.1 -4369.9,625.2 -6223.8,854.6"/><polygon points="-5239.6,803.6 -3708.5,596.8 -2881.2,485.1 -1842.9,345.2 -1188.6,257.0 -777.0,201.5 -494.3,163.4 -179.1,120.7 491.2,30.0 495.1,30.0 -178.6,121.9 -496.3,165.2 -783.3,204.5 -1204.4,262.1 -1882.6,355.0 -2980.8,505.3 -3868.6,626.7 -5550.2,856.5"/><polygon points="-4605.6,805.4 -3229.4,598.2 -2485.9,486.3 -1552.6,346.0 -964.4,257.6 -594.4,202.0 -340.3,163.8 -57.1,121.1 546.2,30.0 550.2,30.0 -55.7,122.2 -341.0,165.6 -598.5,205.0 -976.4,262.8 -1585.0,355.8 -2570.5,506.5 -3367.3,628.1 -4876.6,858.4"/><polygon points="-3971.5,807.2 -2750.4,599.6 -2090.6,487.4 -1262.2,346.8 -740.1,258.2 -411.8,202.5 -186.2,164.2 65.0,121.4 601.1,30.0 605.0,30.0 67.2,122.6 -185.6,166.1 -413.6,205.5 -748.3,263.4 -1287.3,356.7 -2160.1,507.6 -2866.0,629.5 -4203.0,860.4"/><polygon points="-3337.4,809.0 -2271.3,600.9 -1695.2,488.5 -971.8,347.7 -515.9,258.9 -229.2,203.0 -32.2,164.7 187.1,121.8 655.7,30.0 659.6,30.0 190.2,122.9 -30.2,166.5 -228.8,206.1 -520.3,264.1 -989.7,357.5 -1749.8,508.8 -2364.7,630.9 -3529.4,862.3"/><polygon points="-2703.4,810.8 -1792.2,602.3 -1299.9,489.6 -681.5,348.5 -291.7,259.5 -46.5,203.6 121.9,165.1 309.1,122.1 710.0,30.0 713.9,30.0 313.1,123.3 125.2,167.0 -44.0,206.6 -292.2,264.7 -692.0,358.4 -1339.5,510.0 -1863.4,632.4 -2855.8,864.2"/><polygon points="-2069.3,812.6 -1313.2,603.6 -904.6,490.8 -391.1,349.3 -67.5,260.2 136.1,204.1 275.9,165.6 431.2,122.5 714.0,43.9 714.0,45.2 436.0,123.6 280.6,167.4 140.9,207.1 -64.2,265.4 -394.4,359.2 -929.1,511.1 -1362.1,633.8 -2182.2,866.1"/><polygon points="-1435.2,814.4 -834.1,605.0 -509.3,491.9 -100.7,350.1 156.8,260.8 318.7,204.6 430.0,166.0 553.3,122.8 714.0,66.5 714.0,68.6 558.9,124.0 436.0,167.8 325.7,207.6 163.9,266.0 -96.8,360.0 -518.8,512.3 -860.8,635.2 -1508.6,868.0"/><polygon points="-801.2,816.2 -355.1,606.4 -114.0,493.0 189.6,351.0 381.0,261.4 501.3,205.1 584.0,166.4 675.3,123.1 714.0,104.8 714.0,108.6 681.8,124.3 591.4,168.3 510.5,208.2 391.9,266.7 200.9,360.9 -108.5,513.5 -359.5,636.6 -835.0,869.9"/><polygon points="-167.1,818.0 124.0,607.7 281.3,494.1 480.0,351.8 605.2,262.1 684.0,205.6 738.1,166.9 797.4,123.5 966.5,-0.2 968.6,-0.1 804.7,124.7 746.8,168.7 695.4,208.7 620.0,267.3 498.5,361.7 301.8,514.6 141.8,638.1 -161.4,871.9"/></g>
<g fill="url(#L5)" class="gl"><polygon points="-215.5,-6.2 -73.2,122.1 -24.0,166.4 19.6,206.5 83.5,265.4 186.4,360.1 352.7,513.2 487.9,636.6 743.5,870.1 757.5,824.5 508.1,611.0 373.6,495.9 203.8,351.7 96.9,261.0 29.8,204.0 -16.3,164.9 -66.8,121.1 -213.8,-6.2"/><polygon points="-23.0,85.3 44.0,122.4 124.1,166.8 195.7,207.0 300.7,266.0 469.6,360.9 742.8,514.3 964.2,638.0 1382.7,871.9 1364.8,826.2 966.4,612.3 751.5,497.0 481.1,352.5 311.0,261.6 204.1,204.5 130.7,165.3 49.7,121.5 -23.0,82.1"/><polygon points="-23.0,49.0 161.1,122.7 272.1,167.2 371.7,207.5 517.8,266.6 752.9,361.7 1132.9,515.4 1440.4,639.4 2021.9,873.7 1972.0,828.0 1424.7,613.7 1129.5,498.1 758.5,353.3 525.0,262.2 378.4,205.0 277.6,165.7 166.1,121.8 -23.0,47.3"/><polygon points="-18.2,30.0 278.2,123.1 420.2,167.7 547.8,208.0 735.0,267.2 1036.1,362.5 1522.9,516.5 1916.7,640.7 2661.1,875.5 2579.3,829.7 1883.0,615.0 1507.4,499.1 1035.8,354.1 739.1,262.8 552.6,205.5 424.6,166.1 282.5,122.1 -14.8,30.0"/><polygon points="33.8,30.0 395.3,123.4 568.2,168.1 723.9,208.5 952.1,267.9 1319.3,363.3 1913.0,517.6 2392.9,642.1 3300.3,877.4 3186.5,831.4 2341.3,616.3 1885.4,500.2 1313.2,354.9 953.1,263.4 726.9,206.0 571.6,166.5 399.0,122.4 37.1,30.0"/><polygon points="85.6,30.0 512.4,123.7 716.3,168.5 899.9,209.0 1169.3,268.5 1602.6,364.1 2303.1,518.7 2869.2,643.4 3939.5,879.2 3793.8,833.1 2799.6,617.6 2263.3,501.3 1590.6,355.7 1167.2,264.1 901.2,206.5 718.5,167.0 515.4,122.8 88.9,30.0"/><polygon points="137.1,30.0 629.6,124.1 864.3,168.9 1076.0,209.5 1386.4,269.1 1885.8,364.9 2693.2,519.8 3345.5,644.8 4578.7,881.0 4401.0,834.9 3257.9,618.9 2641.3,502.4 1867.9,356.5 1381.3,264.7 1075.5,207.0 865.5,167.4 631.8,123.1 140.4,30.0"/><polygon points="188.5,30.0 746.7,124.4 1012.4,169.3 1252.1,210.0 1603.6,269.7 2169.0,365.7 3083.3,520.9 3821.7,646.1 5217.9,882.8 5008.3,836.6 3716.2,620.2 3019.2,503.4 2145.3,357.3 1595.3,265.3 1249.7,207.5 1012.5,167.8 748.3,123.4 191.7,30.0"/><polygon points="239.6,30.0 863.8,124.7 1160.4,169.8 1428.1,210.5 1820.7,270.3 2452.3,366.5 3473.4,522.1 4298.0,647.5 5857.1,884.6 5615.5,838.3 4174.5,621.5 3397.2,504.5 2422.6,358.0 1809.4,265.9 1424.0,208.0 1159.4,168.2 864.7,123.8 242.9,30.0"/><polygon points="290.6,30.0 980.9,125.1 1308.5,170.2 1604.2,211.0 2037.9,271.0 2735.5,367.3 3863.5,523.2 4774.3,648.8 6496.3,886.5 6222.8,840.0 4632.8,622.8 3775.1,505.6 2700.0,358.8 2023.4,266.5 1598.3,208.5 1306.4,168.6 981.2,124.1 293.8,30.0"/><polygon points="341.3,30.0 1098.0,125.4 1456.5,170.6 1780.2,211.5 2255.0,271.6 3018.7,368.1 4253.6,524.3 5250.5,650.2 7135.4,888.3 6830.0,841.8 5091.1,624.1 4153.1,506.7 2977.3,359.6 2237.5,267.1 1772.6,209.0 1453.4,169.1 1097.6,124.4 344.6,30.0"/><polygon points="-6528.2,802.7 -4677.5,595.7 -3678.8,484.0 -2426.6,344.1 -1638.3,256.0 -1142.9,200.6 -802.7,162.6 -423.3,120.1 380.5,30.0 384.1,30.0 -424.3,121.1 -806.9,164.2 -1152.4,203.3 -1659.2,260.5 -2474.8,352.7 -3794.0,501.8 -4859.3,622.1 -6874.5,849.6"/><polygon points="-5892.1,804.5 -4197.3,597.1 -3282.6,485.1 -2135.8,344.9 -1413.9,256.6 -960.1,201.1 -648.5,163.0 -301.2,120.4 436.1,30.0 439.6,30.0 -301.4,121.4 -651.5,164.7 -967.7,203.8 -1431.4,261.2 -2177.6,353.6 -3384.5,503.0 -4359.3,623.5 -6203.2,851.5"/><polygon points="-5255.9,806.3 -3717.0,598.4 -2886.5,486.2 -1845.1,345.7 -1189.5,257.2 -777.4,201.7 -494.4,163.5 -179.1,120.8 491.4,30.0 494.9,30.0 -178.6,121.8 -496.2,165.1 -783.0,204.3 -1203.5,261.8 -1880.3,354.4 -2975.1,504.1 -3859.3,624.9 -5532.0,853.4"/><polygon points="-4619.8,808.1 -3236.8,599.8 -2490.4,487.3 -1554.3,346.5 -965.0,257.9 -594.6,202.2 -340.3,163.9 -57.0,121.1 546.4,30.0 550.0,30.0 -55.7,122.1 -340.9,165.5 -598.2,204.8 -975.7,262.5 -1583.1,355.3 -2565.6,505.3 -3359.3,626.4 -4860.7,855.3"/><polygon points="-3983.6,810.0 -2756.5,601.2 -2094.3,488.5 -1263.6,347.4 -740.6,258.5 -411.9,202.7 -186.2,164.3 65.1,121.5 601.3,30.0 604.8,30.0 67.1,122.5 -185.6,166.0 -413.5,205.4 -747.9,263.1 -1285.9,356.1 -2156.1,506.5 -2859.3,627.8 -4189.4,857.2"/><polygon points="-3347.5,811.8 -2276.3,602.5 -1698.2,489.6 -972.8,348.2 -516.2,259.2 -229.1,203.2 -32.1,164.8 187.2,121.8 655.9,30.0 659.4,30.0 190.0,122.8 -30.3,166.4 -228.8,205.9 -520.0,263.8 -988.7,356.9 -1746.7,507.6 -2359.3,629.2 -3518.1,859.1"/><polygon points="-2711.4,813.6 -1796.0,603.9 -1302.1,490.7 -682.0,349.0 -291.7,259.8 -46.4,203.7 122.1,165.2 309.4,122.2 710.2,30.0 713.7,30.0 312.8,123.2 125.0,166.9 -44.1,206.4 -292.2,264.4 -691.4,357.8 -1337.2,508.8 -1859.3,630.6 -2846.8,861.0"/><polygon points="-2075.2,815.4 -1315.8,605.3 -905.9,491.9 -391.3,349.8 -67.3,260.4 136.3,204.3 276.2,165.7 431.5,122.5 714.0,44.0 714.0,45.2 435.7,123.5 280.3,167.3 140.6,206.9 -64.4,265.1 -394.2,358.6 -927.7,510.0 -1359.3,632.0 -2175.5,863.0"/><polygon points="-1439.1,817.2 -835.5,606.6 -509.8,493.0 -100.5,350.7 157.1,261.1 319.1,204.8 430.3,166.1 553.6,122.9 714.0,66.6 714.0,68.4 558.6,123.9 435.6,167.7 325.3,207.5 163.5,265.7 -97.0,359.5 -518.3,511.1 -859.2,633.5 -1504.3,864.9"/><polygon points="-803.0,819.0 -355.3,608.0 -113.7,494.1 190.2,351.5 381.6,261.7 501.8,205.3 584.4,166.5 675.7,123.2 714.0,105.0 714.0,108.4 681.4,124.2 591.0,168.2 510.0,208.0 391.3,266.4 200.2,360.3 -108.8,512.3 -359.2,634.9 -833.0,866.8"/><polygon points="-166.8,820.8 125.0,609.4 282.4,495.2 481.0,352.3 606.0,262.4 684.6,205.8 738.5,167.0 797.8,123.6 966.6,-0.2 968.5,-0.1 804.3,124.6 746.3,168.6 694.7,208.5 619.1,267.0 497.5,361.2 300.7,513.5 140.8,636.3 -161.7,868.7"/></g>
<g fill="url(#L6)" class="gl"><polygon points="-215.4,-6.2 -72.8,122.0 -23.5,166.3 20.3,206.4 84.4,265.1 187.5,359.5 354.0,512.1 489.2,635.0 744.4,867.1 756.7,827.2 506.9,612.6 372.3,496.9 202.7,352.2 96.1,261.3 29.2,204.2 -16.8,165.0 -67.2,121.2 -213.9,-6.2"/><polygon points="-23.0,85.1 44.3,122.3 124.5,166.7 196.2,206.9 301.3,265.7 470.4,360.4 743.3,513.2 964.3,636.3 1381.5,868.9 1365.8,828.9 966.3,613.9 751.0,498.0 480.4,353.0 310.4,261.9 203.6,204.7 130.3,165.4 49.3,121.5 -23.0,82.3"/><polygon points="-23.0,48.9 161.4,122.7 272.5,167.1 372.2,207.4 518.3,266.3 753.2,361.2 1132.6,514.3 1439.4,637.7 2018.6,870.7 1975.0,830.7 1425.7,615.2 1129.7,499.1 758.1,353.8 524.6,262.5 377.9,205.2 277.3,165.8 165.8,121.8 -23.0,47.4"/><polygon points="-18.0,30.0 278.5,123.0 420.5,167.6 548.1,207.9 735.2,267.0 1036.1,362.0 1521.9,515.4 1914.5,639.0 2655.7,872.5 2584.1,832.4 1885.0,616.5 1508.4,500.2 1035.9,354.6 738.8,263.1 552.3,205.7 424.3,166.2 282.3,122.2 -15.1,30.0"/><polygon points="34.0,30.0 395.5,123.3 568.4,168.0 724.1,208.4 952.2,267.6 1318.9,362.8 1911.3,516.5 2389.6,640.4 3292.8,874.3 3193.3,834.1 2344.4,617.8 1887.1,501.3 1313.6,355.4 953.1,263.7 726.7,206.1 571.4,166.6 398.7,122.5 36.9,30.0"/><polygon points="85.8,30.0 512.6,123.7 716.4,168.4 900.0,208.9 1169.1,268.2 1601.8,363.6 2300.6,517.6 2864.7,641.7 3929.9,876.2 3802.4,835.9 2803.8,619.1 2265.7,502.3 1591.3,356.2 1167.3,264.3 901.1,206.6 718.4,167.1 515.2,122.8 88.7,30.0"/><polygon points="137.3,30.0 629.7,124.0 864.4,168.8 1076.0,209.4 1386.1,268.8 1884.7,364.4 2689.9,518.7 3339.8,643.1 4567.0,878.0 4411.6,837.6 3263.2,620.4 2644.4,503.4 1869.0,357.0 1381.6,264.9 1075.5,207.1 865.4,167.5 631.7,123.2 140.2,30.0"/><polygon points="188.7,30.0 746.8,124.3 1012.4,169.2 1251.9,209.9 1603.0,269.4 2167.5,365.2 3079.2,519.8 3814.9,644.4 5204.1,879.8 5020.7,839.3 3722.6,621.7 3023.1,504.5 2146.7,357.8 1595.8,265.6 1249.9,207.6 1012.5,167.9 748.2,123.5 191.5,30.0"/><polygon points="239.8,30.0 863.8,124.7 1160.4,169.7 1427.9,210.4 1820.0,270.1 2450.4,366.0 3468.5,520.9 4290.0,645.8 5841.2,881.6 5629.9,841.1 4181.9,623.0 3401.8,505.6 2424.4,358.6 1810.1,266.2 1424.3,208.1 1159.5,168.3 864.7,123.8 242.7,30.0"/><polygon points="290.8,30.0 980.9,125.0 1308.4,170.1 1603.8,210.9 2036.9,270.7 2733.2,366.8 3857.8,522.0 4765.1,647.1 6478.3,883.4 6239.1,842.8 4641.3,624.3 3780.5,506.6 2702.2,359.4 2024.3,266.8 1598.7,208.6 1306.5,168.7 981.1,124.2 293.6,30.0"/><polygon points="341.5,30.0 1098.0,125.3 1456.3,170.5 1779.8,211.4 2253.9,271.3 3016.1,367.6 4247.1,523.1 5240.2,648.5 7115.4,885.2 6848.2,844.5 5100.7,625.7 4159.2,507.7 2979.9,360.1 2238.6,267.4 1773.0,209.1 1453.6,169.1 1097.6,124.5 344.4,30.0"/><polygon points="-6548.8,805.5 -4688.4,597.3 -3685.7,485.0 -2429.5,344.6 -1639.6,256.3 -1143.5,200.8 -802.9,162.7 -423.4,120.1 380.8,30.0 383.9,30.0 -424.2,121.0 -806.6,164.1 -1151.8,203.1 -1657.9,260.3 -2471.7,352.2 -3786.6,500.7 -4847.5,620.4 -6851.8,846.5"/><polygon points="-5910.5,807.3 -4207.0,598.6 -3288.8,486.2 -2138.4,345.4 -1415.0,256.9 -960.6,201.3 -648.7,163.1 -301.2,120.5 436.3,30.0 439.4,30.0 -301.4,121.4 -651.4,164.6 -967.2,203.6 -1430.3,260.9 -2174.9,353.0 -3378.0,501.8 -4348.8,621.8 -6182.8,848.4"/><polygon points="-5272.3,809.1 -3725.6,600.0 -2891.9,487.3 -1847.2,346.2 -1190.3,257.5 -777.7,201.8 -494.5,163.6 -179.1,120.8 491.6,30.0 494.7,30.0 -178.6,121.7 -496.1,165.0 -782.6,204.1 -1202.7,261.5 -1878.1,353.9 -2969.3,503.0 -3850.1,623.2 -5513.8,850.3"/><polygon points="-4634.1,810.9 -3244.1,601.4 -2495.0,488.4 -1556.1,347.1 -965.7,258.2 -594.9,202.3 -340.3,164.0 -56.9,121.2 546.7,30.0 549.7,30.0 -55.8,122.1 -340.9,165.4 -598.0,204.7 -975.0,262.2 -1581.3,354.7 -2560.7,504.2 -3351.3,624.6 -4844.8,852.2"/><polygon points="-3995.9,812.8 -2762.7,602.8 -2098.0,489.6 -1264.9,347.9 -741.0,258.8 -412.0,202.9 -186.1,164.5 65.3,121.5 601.5,30.0 604.6,30.0 67.0,122.4 -185.6,165.9 -413.4,205.2 -747.4,262.8 -1284.5,355.5 -2152.1,505.3 -2852.6,626.0 -4175.9,854.1"/><polygon points="-3357.6,814.6 -2281.3,604.1 -1701.1,490.7 -973.8,348.7 -516.4,259.4 -229.1,203.4 -31.9,164.9 187.4,121.9 656.1,30.0 659.1,30.0 189.8,122.8 -30.4,166.3 -228.8,205.7 -519.8,263.5 -987.7,356.4 -1743.5,506.5 -2353.9,627.5 -3506.9,856.0"/><polygon points="-2719.4,816.4 -1799.8,605.5 -1304.2,491.8 -682.6,349.6 -291.8,260.1 -46.3,203.9 122.2,165.3 309.6,122.2 710.5,30.0 713.5,30.0 312.6,123.1 124.8,166.8 -44.3,206.2 -292.2,264.1 -690.8,357.2 -1334.9,507.6 -1855.2,628.9 -2837.9,857.9"/><polygon points="-2081.2,818.2 -1318.4,606.9 -907.3,492.9 -391.5,350.4 -67.1,260.7 136.6,204.4 276.4,165.8 431.7,122.6 714.0,44.1 714.0,45.1 435.4,123.5 280.1,167.2 140.3,206.8 -64.6,264.8 -394.0,358.1 -926.3,508.8 -1356.4,630.3 -2169.0,859.8"/><polygon points="-1443.0,820.0 -837.0,608.2 -510.3,494.1 -100.3,351.2 157.5,261.4 319.5,204.9 430.6,166.2 553.9,122.9 714.0,66.7 714.0,68.3 558.2,123.8 435.3,167.6 324.9,207.3 163.1,265.4 -97.2,358.9 -517.7,510.0 -857.7,631.7 -1500.0,861.7"/><polygon points="-804.7,821.8 -355.5,609.6 -113.4,495.2 190.8,352.0 382.2,262.0 502.3,205.5 584.8,166.6 676.0,123.3 714.0,105.2 714.0,108.2 681.0,124.2 590.5,168.1 509.5,207.8 390.7,266.1 199.6,359.8 -109.1,511.1 -359.0,633.1 -831.0,863.6"/><polygon points="-166.5,823.7 125.9,611.0 283.5,496.3 482.0,352.9 606.8,262.6 685.2,206.0 739.0,167.1 798.2,123.6 966.7,-0.2 968.4,-0.1 803.9,124.5 745.8,168.5 694.1,208.3 618.3,266.7 496.4,360.6 299.5,512.3 139.7,634.6 -162.0,865.5"/></g>
<g fill="url(#L7)" class="gl"><polygon points="-215.3,-6.2 -72.4,122.0 -23.0,166.2 20.9,206.2 85.2,264.8 188.6,359.0 355.4,511.0 490.5,633.3 745.4,864.1 755.9,829.9 505.7,614.1 371.0,498.0 201.6,352.8 95.3,261.6 28.5,204.3 -17.2,165.1 -67.6,121.2 -214.0,-6.2"/><polygon points="-23.0,84.9 44.7,122.3 124.9,166.6 196.7,206.7 302.0,265.5 471.1,359.8 743.9,512.1 964.4,634.7 1380.4,865.9 1366.9,831.7 966.1,615.4 750.5,499.1 479.7,353.6 309.7,262.2 203.0,204.8 129.9,165.5 48.9,121.6 -23.0,82.5"/><polygon points="-23.0,48.8 161.7,122.6 272.8,167.0 372.6,207.2 518.8,266.1 753.6,360.6 1132.4,513.2 1438.4,636.0 2015.4,867.7 1978.0,833.4 1426.6,616.8 1129.9,500.2 757.8,354.3 524.2,262.8 377.5,205.3 277.0,165.9 165.5,121.9 -23.0,47.5"/><polygon points="-17.8,30.0 278.7,123.0 420.7,167.5 548.4,207.7 735.5,266.7 1036.1,361.4 1521.0,514.3 1912.3,637.4 2650.4,869.5 2589.1,835.2 1887.1,618.1 1509.3,501.2 1035.9,355.1 738.6,263.4 552.0,205.8 424.1,166.3 282.0,122.2 -15.3,30.0"/><polygon points="34.2,30.0 395.8,123.3 568.7,167.9 724.2,208.2 952.3,267.3 1318.6,362.2 1909.5,515.4 2386.3,638.7 3285.4,871.4 3200.1,836.9 2347.5,619.4 1888.7,502.3 1314.0,355.9 953.0,264.0 726.5,206.3 571.2,166.7 398.5,122.6 36.7,30.0"/><polygon points="86.0,30.0 512.8,123.6 716.6,168.3 900.1,208.7 1169.0,267.9 1601.0,363.0 2298.0,516.5 2860.2,640.1 3920.4,873.2 3811.2,838.6 2808.0,620.7 2268.2,503.4 1592.0,356.7 1167.5,264.6 901.0,206.8 718.3,167.2 515.0,122.9 88.4,30.0"/><polygon points="137.5,30.0 629.8,124.0 864.5,168.7 1075.9,209.2 1385.8,268.5 1883.5,363.8 2686.5,517.6 3334.1,641.4 4555.5,875.0 4422.2,840.4 3268.5,622.0 2647.6,504.5 1870.1,357.5 1381.9,265.2 1075.5,207.3 865.4,167.6 631.6,123.2 140.0,30.0"/><polygon points="188.9,30.0 746.9,124.3 1012.4,169.2 1251.8,209.7 1602.5,269.2 2166.0,364.6 3075.1,518.7 3808.1,642.8 5190.5,876.8 5033.3,842.1 3729.0,623.3 3027.0,505.6 2148.2,358.3 1596.3,265.8 1250.0,207.8 1012.5,168.0 748.1,123.6 191.3,30.0"/><polygon points="240.0,30.0 863.9,124.6 1160.3,169.6 1427.6,210.2 1819.3,269.8 2448.5,365.4 3463.6,519.8 4282.0,644.1 5825.5,878.6 5644.4,843.9 4189.4,624.6 3406.5,506.6 2426.3,359.1 1810.8,266.4 1424.5,208.3 1159.6,168.4 864.6,123.9 242.5,30.0"/><polygon points="291.0,30.0 980.9,125.0 1308.2,170.0 1603.4,210.7 2036.0,270.4 2731.0,366.3 3852.1,520.9 4756.0,645.5 6460.5,880.4 6255.4,845.6 4649.9,625.9 3785.9,507.7 2704.3,359.9 2025.2,267.0 1599.0,208.8 1306.7,168.8 981.1,124.2 293.4,30.0"/><polygon points="341.7,30.0 1098.0,125.3 1456.1,170.4 1779.3,211.2 2252.8,271.0 3013.5,367.1 4240.6,522.0 5229.9,646.8 7095.5,882.2 6866.5,847.3 5110.4,627.2 4165.3,508.8 2982.4,360.7 2239.6,267.7 1773.5,209.3 1453.8,169.2 1097.6,124.6 344.2,30.0"/><polygon points="-6569.5,808.3 -4699.4,598.9 -3692.7,486.1 -2432.5,345.1 -1640.9,256.5 -1144.1,200.9 -803.2,162.8 -423.4,120.2 381.0,30.0 383.7,30.0 -424.2,121.0 -806.3,164.0 -1151.2,202.9 -1656.6,260.0 -2468.7,351.6 -3779.2,499.5 -4835.8,618.7 -6829.1,843.4"/><polygon points="-5929.2,810.1 -4216.8,600.2 -3295.0,487.3 -2141.0,345.9 -1416.0,257.2 -961.1,201.5 -648.9,163.2 -301.2,120.6 436.5,30.0 439.2,30.0 -301.4,121.3 -651.2,164.4 -966.7,203.5 -1429.2,260.6 -2172.2,352.5 -3371.4,500.7 -4338.3,620.1 -6162.5,845.3"/><polygon points="-5288.8,811.9 -3734.2,601.6 -2897.3,488.4 -1849.4,346.8 -1191.2,257.8 -778.1,202.0 -494.6,163.7 -179.0,120.9 491.8,30.0 494.5,30.0 -178.7,121.7 -496.0,164.9 -782.2,204.0 -1201.8,261.3 -1875.8,353.3 -2963.7,501.8 -3840.9,621.5 -5495.8,847.2"/><polygon points="-4648.5,813.8 -3251.6,603.0 -2499.5,489.5 -1557.9,347.6 -966.3,258.5 -595.1,202.5 -340.4,164.1 -56.8,121.3 546.9,30.0 549.5,30.0 -55.9,122.0 -340.8,165.3 -597.8,204.5 -974.4,261.9 -1579.4,354.1 -2555.9,503.0 -3343.4,622.9 -4829.1,849.1"/><polygon points="-4008.2,815.6 -2768.9,604.4 -2101.8,490.7 -1266.3,348.4 -741.5,259.1 -412.1,203.0 -186.1,164.6 65.4,121.6 601.7,30.0 604.3,30.0 66.9,122.4 -185.7,165.8 -413.3,205.0 -747.0,262.6 -1283.0,355.0 -2148.2,504.2 -2846.0,624.3 -4162.4,851.0"/><polygon points="-3367.8,817.4 -2286.3,605.7 -1704.1,491.8 -974.7,349.3 -516.6,259.7 -229.1,203.5 -31.8,165.0 187.6,121.9 656.3,30.0 658.9,30.0 189.6,122.7 -30.5,166.2 -228.9,205.5 -519.6,263.2 -986.6,355.8 -1740.4,505.3 -2348.5,625.7 -3495.8,852.9"/><polygon points="-2727.5,819.2 -1803.7,607.1 -1306.3,492.9 -683.2,350.1 -291.8,260.4 -46.1,204.1 122.4,165.4 309.8,122.3 710.7,30.0 713.3,30.0 312.4,123.1 124.6,166.7 -44.4,206.1 -292.1,263.8 -690.2,356.7 -1332.7,506.5 -1851.1,627.2 -2829.1,854.8"/><polygon points="-2087.2,821.1 -1321.0,608.5 -908.6,494.1 -391.6,350.9 -66.9,261.0 136.9,204.6 276.7,165.9 432.0,122.6 714.0,44.1 714.0,45.0 435.2,123.4 279.8,167.1 140.1,206.6 -64.7,264.5 -393.8,357.5 -924.9,507.6 -1353.6,628.6 -2162.4,856.7"/><polygon points="-1446.9,822.9 -838.4,609.9 -510.8,495.2 -100.1,351.7 157.9,261.7 319.9,205.1 431.0,166.3 554.2,123.0 714.0,66.8 714.0,68.2 557.9,123.8 435.0,167.5 324.5,207.1 162.7,265.1 -97.4,358.4 -517.2,508.8 -856.2,630.0 -1495.7,858.6"/><polygon points="-806.5,824.7 -355.8,611.2 -113.1,496.3 191.5,352.6 382.8,262.3 502.9,205.6 585.2,166.7 676.4,123.3 714.0,105.4 714.0,108.0 680.7,124.1 590.1,168.0 509.0,207.6 390.1,265.8 199.0,359.2 -109.4,510.0 -358.7,631.4 -829.1,860.5"/><polygon points="-166.2,826.5 126.9,612.6 284.6,497.4 483.0,353.4 607.6,262.9 685.8,206.1 739.5,167.2 798.6,123.7 966.8,-0.2 968.3,-0.1 803.5,124.5 745.3,168.4 693.5,208.2 617.5,266.4 495.4,360.0 298.3,511.1 138.7,632.8 -162.4,862.4"/></g>
<g fill="url(#L8)" class="gl"><polygon points="-215.2,-6.2 -72.0,121.9 -22.5,166.1 21.5,206.1 86.1,264.6 189.7,358.5 356.7,509.9 491.8,631.7 746.3,861.2 755.0,832.7 504.4,615.7 369.7,499.1 200.6,353.3 94.5,261.8 27.9,204.5 -17.7,165.2 -68.0,121.3 -214.1,-6.2"/><polygon points="-23.0,84.7 45.0,122.2 125.3,166.5 197.3,206.6 302.6,265.2 471.8,359.3 744.5,511.0 964.6,633.0 1379.2,863.0 1368.0,834.4 966.0,617.0 749.9,500.1 479.0,354.1 309.1,262.4 202.5,205.0 129.4,165.6 48.6,121.6 -23.0,82.7"/><polygon points="-23.0,48.7 162.0,122.6 273.2,167.0 373.0,207.1 519.2,265.8 753.9,360.1 1132.2,512.1 1437.4,634.4 2012.2,864.8 1981.0,836.2 1427.6,618.3 1130.1,501.2 757.5,354.9 523.7,263.0 377.1,205.5 276.6,166.0 165.2,122.0 -23.0,47.6"/><polygon points="-17.6,30.0 279.0,122.9 421.0,167.4 548.7,207.6 735.8,266.4 1036.1,360.9 1520.0,513.2 1910.2,635.7 2645.1,866.6 2594.0,837.9 1889.1,619.6 1510.3,502.3 1035.9,355.6 738.3,263.7 551.7,206.0 423.8,166.4 281.7,122.3 -15.5,30.0"/><polygon points="34.4,30.0 396.0,123.2 568.9,167.8 724.4,208.1 952.3,267.0 1318.2,361.7 1907.7,514.3 2383.0,637.1 3278.1,868.4 3207.0,839.7 2350.7,620.9 1890.4,503.4 1314.3,356.4 953.0,264.3 726.3,206.5 571.0,166.8 398.3,122.6 36.5,30.0"/><polygon points="86.2,30.0 513.0,123.6 716.7,168.2 900.2,208.6 1168.9,267.6 1600.3,362.5 2295.5,515.4 2855.7,638.4 3911.0,870.2 3820.0,841.4 2812.2,622.3 2270.6,504.5 1592.8,357.2 1167.6,264.9 901.0,207.0 718.1,167.2 514.9,123.0 88.2,30.0"/><polygon points="137.7,30.0 630.0,123.9 864.6,168.6 1075.9,209.1 1385.4,268.3 1882.4,363.3 2683.2,516.5 3328.5,639.8 4544.0,872.0 4433.0,843.2 3273.8,623.6 2650.8,505.5 1871.2,358.0 1382.2,265.5 1075.6,207.5 865.3,167.7 631.4,123.3 139.8,30.0"/><polygon points="189.1,30.0 747.0,124.2 1012.4,169.1 1251.6,209.6 1602.0,268.9 2164.5,364.1 3071.0,517.6 3801.3,641.1 5176.9,873.8 5046.0,844.9 3735.4,624.9 3030.9,506.6 2149.7,358.8 1596.8,266.1 1250.2,208.0 1012.5,168.1 748.0,123.6 191.1,30.0"/><polygon points="240.2,30.0 864.0,124.6 1160.3,169.5 1427.3,210.1 1818.6,269.5 2446.6,364.9 3458.7,518.7 4274.1,642.5 5809.9,875.6 5658.9,846.6 4196.9,626.2 3411.1,507.7 2428.1,359.6 1811.5,266.7 1424.8,208.5 1159.6,168.5 864.5,124.0 242.3,30.0"/><polygon points="291.2,30.0 981.0,124.9 1308.1,169.9 1603.1,210.6 2035.1,270.1 2728.7,365.7 3846.5,519.8 4746.9,643.8 6442.8,877.4 6271.9,848.4 4658.5,627.5 3791.3,508.8 2706.5,360.4 2026.1,267.3 1599.4,208.9 1306.8,168.9 981.1,124.3 293.2,30.0"/><polygon points="341.9,30.0 1097.9,125.2 1455.9,170.3 1778.8,211.1 2251.7,270.7 3010.8,366.5 4234.2,520.9 5219.7,645.1 7075.7,879.2 6884.9,850.1 5120.1,628.8 4171.5,509.9 2985.0,361.2 2240.7,267.9 1774.0,209.4 1454.0,169.3 1097.7,124.6 344.0,30.0"/><polygon points="-6590.3,811.1 -4710.5,600.5 -3699.8,487.2 -2435.5,345.6 -1642.2,256.8 -1144.6,201.1 -803.4,162.9 -423.5,120.3 381.2,30.0 383.4,30.0 -424.1,120.9 -806.1,163.9 -1150.6,202.8 -1655.2,259.7 -2465.6,351.1 -3771.8,498.4 -4824.1,617.0 -6806.7,840.4"/><polygon points="-5947.9,813.0 -4226.7,601.9 -3301.2,488.4 -2143.5,346.5 -1417.1,257.5 -961.5,201.6 -649.1,163.3 -301.2,120.6 436.7,30.0 439.0,30.0 -301.4,121.3 -651.0,164.3 -966.2,203.3 -1428.1,260.3 -2169.6,351.9 -3364.9,499.5 -4327.9,618.4 -6142.3,842.3"/><polygon points="-5305.4,814.8 -3742.8,603.2 -2902.7,489.5 -1851.6,347.3 -1192.1,258.1 -778.4,202.1 -494.8,163.8 -179.0,121.0 492.0,30.0 494.3,30.0 -178.7,121.6 -495.9,164.8 -781.9,203.8 -1200.9,261.0 -1873.6,352.7 -2958.0,500.7 -3831.7,619.8 -5477.9,844.2"/><polygon points="-4663.0,816.6 -3259.0,604.6 -2504.1,490.6 -1559.6,348.1 -967.0,258.7 -595.3,202.7 -340.4,164.2 -56.7,121.3 547.1,30.0 549.3,30.0 -56.0,122.0 -340.8,165.2 -597.6,204.3 -973.7,261.6 -1577.6,353.6 -2551.1,501.8 -3335.6,621.2 -4813.5,846.1"/><polygon points="-4020.6,818.4 -2775.2,606.0 -2105.6,491.8 -1267.7,349.0 -741.9,259.4 -412.2,203.2 -186.1,164.7 65.5,121.7 601.9,30.0 604.1,30.0 66.7,122.3 -185.7,165.7 -413.2,204.9 -746.5,262.3 -1281.6,354.4 -2144.2,503.0 -2839.4,622.6 -4149.1,848.0"/><polygon points="-3378.1,820.3 -2291.3,607.4 -1707.0,492.9 -975.7,349.8 -516.9,260.0 -229.1,203.7 -31.7,165.1 187.8,122.0 656.5,30.0 658.7,30.0 189.5,122.7 -30.6,166.1 -228.9,205.4 -519.3,262.9 -985.6,355.3 -1737.3,504.2 -2343.2,624.0 -3484.7,849.9"/><polygon points="-2735.7,822.1 -1807.5,608.7 -1308.5,494.0 -683.8,350.6 -291.8,260.7 -46.0,204.2 122.6,165.5 310.0,122.4 710.9,30.0 713.1,30.0 312.2,123.0 124.5,166.6 -44.5,205.9 -292.1,263.6 -689.6,356.1 -1330.4,505.3 -1847.0,625.4 -2820.3,851.8"/><polygon points="-2093.2,823.9 -1323.7,610.1 -909.9,495.2 -391.8,351.5 -66.7,261.3 137.1,204.8 277.0,166.0 432.3,122.7 714.0,44.2 714.0,44.9 434.9,123.4 279.5,167.0 139.8,206.4 -64.9,264.2 -393.7,357.0 -923.5,506.5 -1350.8,626.9 -2155.9,853.6"/><polygon points="-1450.8,825.7 -839.8,611.5 -511.4,496.3 -99.9,352.3 158.3,261.9 320.2,205.3 431.3,166.4 554.5,123.1 714.0,66.9 714.0,68.1 557.6,123.7 434.6,167.4 324.1,207.0 162.3,264.8 -97.7,357.8 -516.6,507.6 -854.7,628.3 -1491.5,855.5"/><polygon points="-808.3,827.6 -356.0,612.9 -112.8,497.4 192.1,353.1 383.4,262.6 503.4,205.8 585.6,166.8 676.7,123.4 714.0,105.6 714.0,107.8 680.3,124.1 589.7,167.9 508.5,207.5 389.4,265.5 198.3,358.6 -109.7,508.8 -358.5,629.7 -827.1,857.4"/><polygon points="-165.9,829.4 127.8,614.2 285.7,498.6 484.0,354.0 608.4,263.2 686.5,206.3 740.0,167.3 799.0,123.8 967.0,-0.2 968.1,-0.1 803.0,124.4 744.8,168.3 692.8,208.0 616.6,266.1 494.3,359.5 297.1,510.0 137.7,631.1 -162.7,859.3"/></g>
<g fill="url(#L9)" class="gl"><polygon points="-215.0,-6.2 -71.5,121.8 -21.9,166.0 22.3,205.9 87.1,264.2 191.1,357.8 358.4,508.5 493.4,629.6 747.4,857.5 753.9,836.2 502.9,617.7 368.1,500.4 199.2,353.9 93.4,262.2 27.1,204.7 -18.3,165.3 -68.5,121.4 -214.2,-6.2"/><polygon points="-23.0,84.4 45.5,122.2 125.8,166.4 197.9,206.4 303.5,264.8 472.7,358.6 745.2,509.6 964.8,631.0 1377.8,859.3 1369.4,837.9 965.8,619.0 749.2,501.5 478.1,354.7 308.3,262.8 201.9,205.2 128.9,165.7 48.1,121.7 -23.0,83.0"/><polygon points="-23.0,48.5 162.4,122.5 273.6,166.8 373.5,206.9 519.8,265.4 754.4,359.4 1131.9,510.7 1436.1,632.3 2008.2,861.1 1984.8,839.7 1428.8,620.3 1130.3,502.6 757.0,355.5 523.1,263.4 376.6,205.7 276.2,166.1 164.8,122.0 -23.0,47.8"/><polygon points="-17.3,30.0 279.4,122.8 421.4,167.3 549.1,207.4 736.1,266.1 1036.0,360.2 1518.7,511.8 1907.5,633.7 2638.5,862.9 2600.2,841.4 1891.7,621.6 1511.5,503.6 1035.9,356.3 738.0,264.0 551.4,206.2 423.4,166.5 281.4,122.4 -15.7,30.0"/><polygon points="34.7,30.0 396.3,123.2 569.1,167.7 724.7,207.9 952.4,266.7 1317.7,361.0 1905.5,512.9 2378.8,635.0 3268.9,864.7 3215.6,843.2 2354.6,622.9 1892.6,504.7 1314.8,357.1 952.9,264.6 726.1,206.7 570.7,167.0 398.0,122.7 36.2,30.0"/><polygon points="86.4,30.0 513.2,123.5 716.9,168.1 900.3,208.4 1168.7,267.3 1599.3,361.8 2292.3,514.0 2850.2,636.4 3899.3,866.5 3831.0,844.9 2817.6,624.2 2273.7,505.8 1593.7,357.9 1167.7,265.2 900.9,207.2 717.9,167.4 514.6,123.0 88.0,30.0"/><polygon points="138.0,30.0 630.2,123.8 864.7,168.5 1075.8,208.9 1385.0,267.9 1881.0,362.6 2679.1,515.1 3321.5,637.7 4529.7,868.3 4446.5,846.7 3280.5,625.6 2654.8,506.9 1872.6,358.7 1382.6,265.8 1075.6,207.7 865.2,167.8 631.2,123.4 139.5,30.0"/><polygon points="189.3,30.0 747.1,124.1 1012.4,168.9 1251.4,209.4 1601.3,268.5 2162.6,363.4 3065.9,516.2 3792.9,639.0 5160.1,870.1 5061.9,848.4 3743.4,626.9 3035.9,508.0 2151.5,359.5 1597.5,266.4 1250.3,208.2 1012.5,168.2 747.9,123.7 190.9,30.0"/><polygon points="240.5,30.0 864.0,124.5 1160.2,169.4 1427.0,209.9 1817.7,269.1 2444.3,364.2 3452.7,517.3 4264.3,640.4 5790.5,871.9 5677.3,850.2 4206.4,628.2 3417.0,509.1 2430.4,360.3 1812.3,267.1 1425.1,208.7 1159.7,168.6 864.5,124.0 242.0,30.0"/><polygon points="291.4,30.0 981.0,124.8 1307.9,169.8 1602.6,210.4 2034.0,269.8 2725.9,365.0 3839.5,518.4 4735.6,641.7 6420.8,873.7 6292.7,851.9 4669.3,629.5 3798.1,510.1 2709.3,361.1 2027.2,267.7 1599.8,209.1 1307.0,169.0 981.1,124.4 293.0,30.0"/><polygon points="342.2,30.0 1097.9,125.1 1455.7,170.2 1778.2,210.9 2250.3,270.4 3007.6,365.8 4226.2,519.5 5207.0,643.1 7051.2,875.4 6908.1,853.7 5132.3,630.8 4179.2,511.2 2988.2,361.9 2242.1,268.3 1774.6,209.6 1454.2,169.5 1097.7,124.7 343.7,30.0"/><polygon points="-6616.6,814.7 -4724.4,602.5 -3708.6,488.6 -2439.2,346.3 -1643.8,257.2 -1145.4,201.3 -803.8,163.0 -423.6,120.4 381.5,30.0 383.2,30.0 -424.0,120.8 -805.7,163.8 -1149.8,202.6 -1653.6,259.3 -2461.8,350.4 -3762.6,497.0 -4809.6,614.9 -6778.8,836.6"/><polygon points="-5971.5,816.5 -4239.0,603.9 -3309.0,489.7 -2146.7,347.1 -1418.5,257.8 -962.1,201.8 -649.3,163.5 -301.3,120.7 437.0,30.0 438.7,30.0 -301.4,121.2 -650.7,164.2 -965.6,203.1 -1426.7,260.0 -2166.3,351.2 -3356.8,498.1 -4315.0,616.3 -6117.3,838.5"/><polygon points="-5326.4,818.4 -3753.7,605.3 -2909.5,490.9 -1854.3,348.0 -1193.2,258.5 -778.9,202.4 -494.9,163.9 -179.0,121.0 492.3,30.0 494.0,30.0 -178.7,121.5 -495.7,164.7 -781.5,203.6 -1199.8,260.6 -1870.8,352.1 -2951.0,499.3 -3820.4,617.7 -5455.7,840.4"/><polygon points="-4681.3,820.2 -3268.4,606.6 -2509.9,492.0 -1561.8,348.8 -967.8,259.1 -595.6,202.9 -340.5,164.3 -56.6,121.4 547.4,30.0 549.0,30.0 -56.1,121.9 -340.8,165.1 -597.3,204.1 -972.8,261.3 -1575.3,352.9 -2545.1,500.4 -3325.8,619.1 -4794.1,842.3"/><polygon points="-4036.2,822.0 -2783.0,608.0 -2110.3,493.1 -1269.4,349.6 -742.5,259.7 -412.3,203.4 -186.0,164.8 65.7,121.7 602.2,30.0 603.8,30.0 66.6,122.2 -185.8,165.5 -413.1,204.6 -745.9,261.9 -1279.9,353.7 -2139.3,501.6 -2831.2,620.5 -4132.6,844.2"/><polygon points="-3391.1,823.9 -2297.7,609.4 -1710.7,494.3 -976.9,350.5 -517.2,260.4 -229.1,203.9 -31.6,165.2 188.0,122.1 656.8,30.0 658.4,30.0 189.2,122.6 -30.8,166.0 -228.9,205.2 -519.0,262.5 -984.4,354.6 -1733.5,502.7 -2336.6,621.9 -3471.0,846.1"/><polygon points="-2745.9,825.7 -1812.3,610.8 -1311.2,495.4 -684.5,351.3 -291.9,261.0 -45.8,204.4 122.8,165.7 310.3,122.4 711.2,30.0 712.8,30.0 311.9,122.9 124.2,166.4 -44.7,205.7 -292.1,263.2 -688.9,355.4 -1327.6,503.9 -1842.0,623.3 -2809.4,847.9"/><polygon points="-2100.8,827.5 -1327.0,612.2 -911.6,496.5 -392.1,352.1 -66.5,261.7 137.5,205.0 277.3,166.1 432.6,122.8 714.0,44.3 714.0,44.9 434.6,123.3 279.2,166.9 139.5,206.2 -65.2,263.8 -393.4,356.3 -921.8,505.0 -1347.4,624.7 -2147.8,849.8"/><polygon points="-1455.7,829.4 -841.7,613.5 -512.0,497.7 -99.6,353.0 158.8,262.3 320.7,205.5 431.7,166.5 554.9,123.1 714.0,67.1 714.0,67.9 557.2,123.6 434.2,167.3 323.6,206.7 161.8,264.5 -97.9,357.1 -516.0,506.2 -852.8,626.1 -1486.3,851.7"/><polygon points="-810.6,831.2 -356.3,614.9 -112.4,498.8 192.8,353.8 384.1,262.9 504.0,206.0 586.1,167.0 677.2,123.5 714.0,105.9 714.0,107.5 679.9,124.0 589.2,167.7 507.8,207.3 388.7,265.1 197.5,357.9 -110.1,507.3 -358.2,627.5 -824.7,853.6"/><polygon points="-165.5,833.0 129.0,616.3 287.1,500.0 485.3,354.6 609.5,263.6 687.3,206.5 740.6,167.4 799.5,123.8 967.1,-0.2 968.0,-0.1 802.5,124.3 744.2,168.2 692.0,207.8 615.6,265.8 493.0,358.8 295.7,508.5 136.4,628.9 -163.1,855.5"/></g>
<g fill="rgb(255,252,236)" class="gm"><polygon points="-215.5,-6.2 -73.4,122.1 -24.2,166.4 19.3,206.6 83.1,265.5 185.8,360.3 352.0,513.7 487.2,637.5 743.1,871.6 757.9,823.1 508.7,610.3 374.2,495.4 204.3,351.5 97.3,260.9 30.1,203.9 -16.1,164.8 -66.6,121.1 -213.7,-6.2"/><polygon points="-23.0,85.4 43.8,122.4 123.9,166.9 195.4,207.1 300.4,266.1 469.3,361.2 742.5,514.8 964.1,638.8 1383.3,873.4 1364.2,824.9 966.5,611.6 751.8,496.5 481.5,352.3 311.3,261.5 204.3,204.4 130.9,165.2 49.8,121.4 -23.0,82.0"/><polygon points="-23.0,49.0 160.9,122.8 272.0,167.3 371.5,207.6 517.6,266.8 752.7,362.0 1133.0,516.0 1440.9,640.2 2023.6,875.2 1970.5,826.6 1424.2,612.9 1129.4,497.5 758.7,353.1 525.3,262.1 378.6,204.9 277.8,165.7 166.2,121.8 -23.0,47.3"/><polygon points="-18.3,30.0 278.1,123.1 420.0,167.7 547.7,208.1 734.9,267.4 1036.1,362.8 1523.4,517.1 1917.8,641.5 2663.8,877.1 2576.8,828.3 1882.0,614.2 1507.0,498.6 1035.8,353.8 739.2,262.7 552.8,205.4 424.7,166.1 282.7,122.1 -14.7,30.0"/><polygon points="33.7,30.0 395.2,123.4 568.1,168.1 723.8,208.6 952.1,268.0 1319.5,363.6 1913.9,518.2 2394.6,642.9 3304.0,878.9 3183.1,830.0 2339.7,615.5 1884.5,499.7 1313.0,354.6 953.2,263.3 727.0,205.9 571.7,166.5 399.1,122.4 37.2,30.0"/><polygon points="85.4,30.0 512.3,123.8 716.2,168.6 899.9,209.1 1169.3,268.6 1603.0,364.4 2304.4,519.3 2871.5,644.3 3944.3,880.7 3789.4,831.8 2797.5,616.8 2262.1,500.7 1590.2,355.4 1167.1,263.9 901.2,206.4 718.6,166.9 515.5,122.7 89.0,30.0"/><polygon points="137.0,30.0 629.5,124.1 864.3,169.0 1076.0,209.6 1386.6,269.2 1886.4,365.2 2694.9,520.4 3348.3,645.6 4584.5,882.5 4395.8,833.5 3255.3,618.1 2639.7,501.8 1867.4,356.2 1381.1,264.5 1075.4,206.9 865.5,167.3 631.9,123.1 140.5,30.0"/><polygon points="188.4,30.0 746.6,124.4 1012.4,169.4 1252.1,210.1 1603.8,269.9 2169.8,366.0 3085.4,521.5 3825.2,647.0 5224.8,884.3 5002.1,835.2 3713.0,619.4 3017.3,502.9 2144.5,357.0 1595.1,265.1 1249.7,207.4 1012.5,167.7 748.3,123.4 191.8,30.0"/><polygon points="239.5,30.0 863.8,124.8 1160.5,169.8 1428.2,210.6 1821.1,270.5 2453.2,366.8 3475.8,522.6 4302.0,648.3 5865.0,886.2 5608.4,836.9 4170.8,620.7 3394.9,504.0 2421.7,357.8 1809.0,265.7 1423.9,207.9 1159.4,168.2 864.7,123.7 243.0,30.0"/><polygon points="290.5,30.0 980.9,125.1 1308.6,170.2 1604.4,211.1 2038.3,271.1 2736.6,367.6 3866.3,523.7 4778.9,649.7 6505.3,888.0 6214.7,838.7 4628.5,622.0 3772.5,505.0 2698.9,358.6 2023.0,266.4 1598.1,208.4 1306.3,168.6 981.2,124.1 293.9,30.0"/><polygon points="341.2,30.0 1098.0,125.4 1456.6,170.7 1780.5,211.6 2255.6,271.7 3020.1,368.4 4256.8,524.8 5255.7,651.0 7145.5,889.8 6821.0,840.4 5086.3,623.3 4150.1,506.1 2976.1,359.4 2236.9,267.0 1772.3,208.9 1453.3,169.0 1097.6,124.4 344.7,30.0"/><polygon points="-6517.9,801.3 -4672.1,594.9 -3675.3,483.4 -2425.1,343.8 -1637.7,255.8 -1142.6,200.5 -802.5,162.5 -423.3,120.1 380.4,30.0 384.2,30.0 -424.3,121.1 -807.0,164.3 -1152.7,203.3 -1659.9,260.7 -2476.3,353.0 -3797.7,502.4 -4865.2,622.9 -6886.0,851.1"/><polygon points="-5882.9,803.1 -4192.4,596.3 -3279.6,484.6 -2134.6,344.6 -1413.3,256.5 -959.9,201.0 -648.4,163.0 -301.2,120.4 436.0,30.0 439.7,30.0 -301.5,121.5 -651.6,164.7 -967.9,203.9 -1431.9,261.3 -2178.9,353.8 -3387.8,503.6 -4364.6,624.4 -6213.5,853.1"/><polygon points="-5247.8,804.9 -3712.7,597.6 -2883.8,485.7 -1844.0,345.4 -1189.0,257.1 -777.2,201.6 -494.4,163.4 -179.1,120.7 491.3,30.0 495.0,30.0 -178.6,121.8 -496.3,165.1 -783.1,204.4 -1204.0,262.0 -1881.5,354.7 -2977.9,504.7 -3863.9,625.8 -5541.1,855.0"/><polygon points="-4612.7,806.8 -3233.1,599.0 -2488.1,486.8 -1553.4,346.3 -964.7,257.7 -594.5,202.1 -340.3,163.9 -57.0,121.1 546.3,30.0 550.1,30.0 -55.7,122.2 -340.9,165.6 -598.4,204.9 -976.1,262.6 -1584.0,355.5 -2568.0,505.9 -3363.3,627.2 -4868.6,856.9"/><polygon points="-3977.6,808.6 -2753.4,600.4 -2092.4,487.9 -1262.9,347.1 -740.4,258.4 -411.8,202.6 -186.2,164.3 65.1,121.4 601.2,30.0 604.9,30.0 67.2,122.5 -185.6,166.0 -413.6,205.4 -748.1,263.3 -1286.6,356.4 -2158.1,507.1 -2862.6,628.6 -4196.2,858.8"/><polygon points="-3342.5,810.4 -2273.8,601.7 -1696.7,489.1 -972.3,347.9 -516.0,259.0 -229.2,203.1 -32.1,164.7 187.2,121.8 655.8,30.0 659.5,30.0 190.1,122.9 -30.2,166.5 -228.8,206.0 -520.2,263.9 -989.2,357.2 -1748.2,508.2 -2362.0,630.1 -3523.7,860.7"/><polygon points="-2707.4,812.2 -1794.1,603.1 -1301.0,490.2 -681.8,348.7 -291.7,259.7 -46.5,203.6 122.0,165.2 309.2,122.1 710.1,30.0 713.8,30.0 312.9,123.2 125.1,166.9 -44.0,206.5 -292.2,264.6 -691.7,358.1 -1338.3,509.4 -1861.3,631.5 -2851.3,862.6"/><polygon points="-2072.3,814.0 -1314.5,604.4 -905.3,491.3 -391.2,349.6 -67.4,260.3 136.2,204.2 276.1,165.6 431.3,122.5 714.0,44.0 714.0,45.2 435.8,123.6 280.5,167.4 140.7,207.0 -64.3,265.2 -394.3,358.9 -928.4,510.6 -1360.7,632.9 -2178.9,864.5"/><polygon points="-1437.2,815.8 -834.8,605.8 -509.6,492.4 -100.6,350.4 157.0,260.9 318.9,204.7 430.1,166.1 553.4,122.8 714.0,66.5 714.0,68.5 558.7,123.9 435.8,167.8 325.5,207.5 163.7,265.9 -96.9,359.8 -518.5,511.7 -860.0,634.3 -1506.4,866.4"/><polygon points="-802.1,817.6 -355.2,607.2 -113.9,493.6 189.9,351.2 381.3,261.6 501.6,205.2 584.2,166.5 675.5,123.2 714.0,104.9 714.0,108.5 681.6,124.3 591.2,168.2 510.3,208.1 391.6,266.5 200.6,360.6 -108.6,512.9 -359.4,635.8 -834.0,868.4"/><polygon points="-167.0,819.4 124.5,608.5 281.9,494.7 480.5,352.1 605.6,262.2 684.3,205.7 738.3,166.9 797.6,123.5 966.6,-0.2 968.6,-0.1 804.5,124.6 746.5,168.7 695.1,208.6 619.5,267.2 498.0,361.5 301.3,514.1 141.3,637.2 -161.5,870.3"/></g>
<g fill="rgb(252,250,232)" class="gm"><polygon points="-215.2,-6.2 -72.2,121.9 -22.8,166.2 21.2,206.1 85.7,264.7 189.2,358.8 356.0,510.4 491.2,632.5 745.8,862.6 755.4,831.3 505.0,614.9 370.4,498.5 201.1,353.0 94.9,261.7 28.2,204.4 -17.5,165.1 -67.8,121.3 -214.0,-6.2"/><polygon points="-23.0,84.8 44.9,122.3 125.1,166.6 197.0,206.6 302.3,265.3 471.5,359.6 744.2,511.5 964.5,633.9 1379.8,864.5 1367.5,833.1 966.1,616.2 750.2,499.6 479.4,353.8 309.4,262.3 202.8,204.9 129.6,165.5 48.8,121.6 -23.0,82.6"/><polygon points="-23.0,48.7 161.9,122.6 273.0,167.0 372.8,207.1 519.0,265.9 753.8,360.4 1132.3,512.6 1437.9,635.2 2013.8,866.3 1979.5,834.8 1427.1,617.5 1130.0,500.7 757.6,354.6 523.9,262.9 377.3,205.4 276.8,165.9 165.3,121.9 -23.0,47.6"/><polygon points="-17.7,30.0 278.9,122.9 420.9,167.4 548.6,207.6 735.6,266.5 1036.1,361.2 1520.5,513.7 1911.2,636.6 2647.8,868.1 2591.5,836.5 1888.1,618.8 1509.8,501.8 1035.9,355.4 738.5,263.5 551.9,205.9 423.9,166.4 281.9,122.3 -15.4,30.0"/><polygon points="34.3,30.0 395.9,123.3 568.8,167.8 724.3,208.1 952.3,267.2 1318.4,362.0 1908.6,514.8 2384.6,637.9 3281.7,869.9 3203.5,838.3 2349.1,620.2 1889.6,502.9 1314.1,356.2 953.0,264.1 726.4,206.4 571.1,166.8 398.4,122.6 36.6,30.0"/><polygon points="86.1,30.0 512.9,123.6 716.6,168.3 900.1,208.6 1168.9,267.8 1600.7,362.8 2296.7,515.9 2858.0,639.2 3915.7,871.7 3815.6,840.0 2810.1,621.5 2269.4,503.9 1592.4,357.0 1167.5,264.7 901.0,206.9 718.2,167.2 514.9,122.9 88.3,30.0"/><polygon points="137.6,30.0 629.9,123.9 864.5,168.7 1075.9,209.1 1385.6,268.4 1883.0,363.6 2684.9,517.0 3331.3,640.6 4549.7,873.5 4427.6,841.8 3271.1,622.8 2649.2,505.0 1870.7,357.8 1382.1,265.4 1075.5,207.4 865.3,167.6 631.5,123.3 139.9,30.0"/><polygon points="189.0,30.0 746.9,124.3 1012.4,169.1 1251.7,209.6 1602.3,269.0 2165.3,364.4 3073.0,518.1 3804.7,641.9 5183.7,875.3 5039.6,843.5 3732.2,624.1 3029.0,506.1 2148.9,358.6 1596.6,266.0 1250.1,207.9 1012.5,168.0 748.0,123.6 191.2,30.0"/><polygon points="240.1,30.0 863.9,124.6 1160.3,169.5 1427.5,210.1 1818.9,269.6 2447.6,365.2 3461.2,519.2 4278.1,643.3 5817.7,877.1 5651.7,845.2 4193.2,625.4 3408.8,507.2 2427.2,359.3 1811.1,266.6 1424.7,208.4 1159.6,168.5 864.6,123.9 242.4,30.0"/><polygon points="291.1,30.0 980.9,124.9 1308.2,169.9 1603.3,210.6 2035.6,270.2 2729.9,366.0 3849.3,520.3 4751.4,644.6 6451.6,878.9 6263.7,847.0 4654.2,626.7 3788.6,508.3 2705.4,360.1 2025.6,267.2 1599.2,208.9 1306.7,168.9 981.1,124.3 293.3,30.0"/><polygon points="341.8,30.0 1098.0,125.3 1456.0,170.4 1779.0,211.1 2252.2,270.9 3012.2,366.8 4237.4,521.4 5224.8,646.0 7085.6,880.7 6875.7,848.7 5115.2,628.0 4168.4,509.3 2983.7,360.9 2240.2,267.8 1773.8,209.4 1453.9,169.3 1097.7,124.6 344.1,30.0"/><polygon points="-6579.9,809.7 -4705.0,599.7 -3696.3,486.7 -2434.0,345.4 -1641.5,256.7 -1144.3,201.0 -803.3,162.8 -423.5,120.2 381.1,30.0 383.5,30.0 -424.1,120.9 -806.2,164.0 -1150.9,202.8 -1655.9,259.8 -2467.1,351.3 -3775.5,498.9 -4829.9,617.8 -6817.9,841.9"/><polygon points="-5938.5,811.5 -4221.7,601.0 -3298.1,487.8 -2142.2,346.2 -1416.6,257.3 -961.3,201.5 -649.0,163.3 -301.2,120.6 436.6,30.0 439.1,30.0 -301.4,121.3 -651.1,164.4 -966.5,203.4 -1428.6,260.5 -2170.9,352.2 -3368.1,500.1 -4333.1,619.2 -6152.4,843.8"/><polygon points="-5297.1,813.4 -3738.5,602.4 -2900.0,488.9 -1850.5,347.0 -1191.6,258.0 -778.2,202.1 -494.7,163.7 -179.0,120.9 491.9,30.0 494.4,30.0 -178.7,121.6 -495.9,164.8 -782.1,203.9 -1201.3,261.1 -1874.7,353.0 -2960.8,501.3 -3836.3,620.6 -5486.8,845.7"/><polygon points="-4655.7,815.2 -3255.3,603.8 -2501.8,490.1 -1558.7,347.9 -966.7,258.6 -595.2,202.6 -340.4,164.2 -56.8,121.3 547.0,30.0 549.4,30.0 -55.9,122.0 -340.8,165.3 -597.7,204.4 -974.0,261.8 -1578.5,353.9 -2553.5,502.4 -3339.5,622.1 -4821.3,847.6"/><polygon points="-4014.4,817.0 -2772.0,605.2 -2103.7,491.2 -1267.0,348.7 -741.7,259.2 -412.1,203.1 -186.1,164.6 65.4,121.6 601.8,30.0 604.2,30.0 66.8,122.3 -185.7,165.7 -413.3,204.9 -746.7,262.4 -1282.3,354.7 -2146.2,503.6 -2842.7,623.5 -4155.8,849.5"/><polygon points="-3373.0,818.8 -2288.8,606.5 -1705.5,492.3 -975.2,349.5 -516.8,259.9 -229.1,203.6 -31.8,165.0 187.7,122.0 656.4,30.0 658.8,30.0 189.5,122.7 -30.6,166.2 -228.9,205.5 -519.4,263.1 -986.1,355.6 -1738.9,504.7 -2345.9,624.9 -3490.2,851.4"/><polygon points="-2731.6,820.7 -1805.6,607.9 -1307.4,493.5 -683.5,350.4 -291.8,260.5 -46.0,204.1 122.5,165.5 309.9,122.3 710.8,30.0 713.2,30.0 312.3,123.0 124.6,166.6 -44.5,206.0 -292.1,263.7 -689.9,356.4 -1331.5,505.9 -1849.0,626.3 -2824.7,853.3"/><polygon points="-2090.2,822.5 -1322.3,609.3 -909.3,494.6 -391.7,351.2 -66.8,261.2 137.0,204.7 276.8,165.9 432.1,122.7 714.0,44.2 714.0,45.0 435.0,123.4 279.7,167.0 139.9,206.5 -64.8,264.3 -393.8,357.2 -924.2,507.1 -1352.2,627.7 -2159.1,855.2"/><polygon points="-1448.8,824.3 -839.1,610.7 -511.1,495.7 -100.0,352.0 158.1,261.8 320.1,205.2 431.1,166.4 554.3,123.0 714.0,66.9 714.0,68.1 557.8,123.7 434.8,167.5 324.3,207.0 162.5,265.0 -97.6,358.1 -516.9,508.2 -855.4,629.1 -1493.6,857.1"/><polygon points="-807.4,826.1 -355.9,612.0 -113.0,496.9 191.8,352.9 383.1,262.4 503.1,205.7 585.4,166.8 676.6,123.4 714.0,105.5 714.0,107.9 680.5,124.1 589.9,167.9 508.7,207.6 389.8,265.6 198.6,358.9 -109.6,509.4 -358.6,630.5 -828.1,859.0"/><polygon points="-166.1,828.0 127.3,613.4 285.2,498.0 483.5,353.7 608.0,263.1 686.2,206.2 739.7,167.2 798.8,123.7 966.9,-0.2 968.2,-0.1 803.2,124.4 745.1,168.4 693.1,208.1 617.0,266.3 494.8,359.8 297.7,510.5 138.2,632.0 -162.5,860.9"/></g>
<!-- chassis dark -->
<polygon points="264,226 352,270 368,272 369,300 356,316 340,326 322,319 300,301 280,290 268,272" fill="#0a0a0a"/>
<polygon points="261.8,169 338.3,147.6 428,177.7 425.6,236.5 351.7,271.3 264,228.4" fill="#e6e6e6"/>
<!-- left face -->
<polygon points="261.6,169.5 351.3,208.3 351,271.5 263.8,228.6" fill="url(#lf)"/>
<g clip-path="url(#lfclip)" filter="url(#rb)">
<polygon points="262,232 300,236 351,262 351,235 300,214 262,215" fill="#5a544d" opacity="0.55"/>
<polygon points="260,205 349,237 349,242 260,210.5" fill="#9a5e18" opacity="0.75"/>
<polygon points="260,222.5 330,203 330,208.5 260,228" fill="#9a5e18" opacity="0.75"/>
<polygon points="260,222 285,215 285,221 260,229" fill="#b87420" opacity="0.6"/>
</g>
<line x1="262.3" y1="178.2" x2="351" y2="215" stroke="#86827c" stroke-width="0.7"/>
<path d="M297.8,217.8 L309.9,223.3 L309.9,226.4" stroke="#8d8a86" stroke-width="0.8" fill="none"/>
<g fill="#9a9a9a"><circle cx="268" cy="186" r="0.5"/><circle cx="296.7" cy="189.2" r="0.5"/><circle cx="308.8" cy="194.7" r="0.5"/><circle cx="335.2" cy="205.7" r="0.5"/><circle cx="268" cy="208" r="0.5"/><circle cx="344" cy="223.3" r="0.5"/><circle cx="344" cy="244.2" r="0.5"/></g>
<line x1="261.8" y1="170.1" x2="351.2" y2="208.8" stroke="#d8d8d8" stroke-width="0.8"/>
<!-- right face -->
<polygon points="351.3,208.3 428.3,177.5 425.8,236.7 351.7,271.7" fill="url(#rf)"/>
<polygon points="351.3,208.3 428.3,177.5 428,185 351.4,215.8" fill="#f1f1f1"/>
<line x1="351.4" y1="215.8" x2="428" y2="185" stroke="#d2d2d2" stroke-width="0.6"/>
<!-- top face -->
<polygon points="261.5,168.6 338.3,147.3 428.3,177.5 351.3,208.3" fill="url(#tf)"/>
<polygon points="352,271.3 426,236.3 426.5,252 404,257 366,273" fill="#0e0e0e"/>
<!-- battery box -->
<polygon points="361.5,270 401.5,253.5 403.5,255.8 405,281 374.5,297 368.5,299.5" fill="#e9e9e9"/>
<polygon points="361.5,270 401.5,253.5 403.5,255.8 367.5,273.3" fill="#f2f2f2"/>
<polygon points="361.5,270 367.5,273.3 374.5,297 368.5,299.5" fill="#dadada"/>
<polygon points="367.5,273.3 403.5,255.8 405,281 374.5,297" fill="#e9e9e9"/>
<!-- latches -->
<g fill="none" stroke="#b9b9b9" stroke-width="0.8">
<polygon points="355.3,251.5 365.5,247.3 366,259.5 355.8,264"/>
<polygon points="413.6,227 422.6,223 422.9,234.2 414,238"/>
</g>
<path d="M357.6,258.6 a3,3 0 0 1 5.6,-2.4 z" fill="#3a3a3a"/>
<path d="M415.6,232.8 a2.8,2.8 0 0 1 5.2,-2.2 z" fill="#3a3a3a"/>
<line x1="380" y1="246" x2="401.5" y2="236.8" stroke="#cfcfcf" stroke-width="1.4"/>
<line x1="380" y1="245.2" x2="401.5" y2="236" stroke="#fafafa" stroke-width="0.6"/>
<ellipse cx="390.8" cy="217.4" rx="0.9" ry="1.3" fill="#333"/>
<!-- rear-right wheel -->
<polygon points="401,250 412,244 426,252 426,272 420,289 406,292 400,284" fill="#0d0d0d"/>
<ellipse cx="416.5" cy="254.5" rx="9.2" ry="6.6" transform="rotate(28 416.5 254.5)" fill="url(#rol)"/>
<ellipse cx="415.5" cy="266" rx="8.4" ry="5.6" transform="rotate(22 415.5 266)" fill="url(#rol)"/>
<path d="M412.6,246.5 C411.8,252 409.5,256 407.8,262" stroke="#e6e6e6" stroke-width="1.3" fill="none"/>
<circle cx="409.6" cy="262.5" r="3.1" fill="#2a2a2a" stroke="#6a6a6a" stroke-width="0.8"/>
<circle cx="409.3" cy="280" r="3.6" fill="#3a3a3a" stroke="#dedede" stroke-width="1.6"/>
<!-- front-left wheel -->
<polygon points="343,274.5 350,273.7 352,280.3 347.5,288.7 342,285.3" fill="url(#rol2)"/>
<polygon points="354.2,277.8 363.3,278.7 365,290.3 356.7,293.7 351.7,290.3" fill="url(#rol2)"/>
<polygon points="347.5,292.8 356.7,294.5 360,303.7 353.3,308.7 347.5,305.3" fill="url(#rol2)"/>
<polygon points="358.3,297.8 366.7,299.5 367.5,305.3 360,312 356.7,308.7" fill="url(#rol2)"/>
<polygon points="350.8,309.5 358.3,312 356.7,317 348.3,319.5 345,315.3" fill="url(#rol2)"/>
<path d="M336,286.5 C342,288 345.5,293 344,301 C343,306 339,310 334.5,311.5" stroke="#dcdcdc" stroke-width="2.2" fill="none"/>
<path d="M344,291 L350,291.5 M343.5,303 L348,306" stroke="#e8e8e8" stroke-width="1.6" fill="none"/>
<ellipse cx="329.6" cy="297" rx="10.8" ry="12.4" transform="rotate(-12 329.6 297)" fill="#d9d9d9"/><ellipse cx="329" cy="297.2" rx="8.6" ry="10" transform="rotate(-12 329 297.2)" fill="url(#hub1)"/>
<circle cx="329" cy="297.3" r="1.5" fill="#1a1208"/>
<circle cx="329" cy="273.8" r="3.6" fill="#6e6e6e" stroke="#222" stroke-width="1.5"/>
<circle cx="329" cy="273.8" r="1.4" fill="#2c2c2c"/>
<circle cx="343.5" cy="286" r="2.6" fill="#3c3c3c" stroke="#777" stroke-width="0.7"/>
<!-- rear-left wheel -->
<path d="M292,257 C296.5,262 297,271 293.5,279" stroke="#bdbdbd" stroke-width="2" fill="none"/>
<ellipse cx="281.5" cy="266.5" rx="10.3" ry="11.8" transform="rotate(-12 281.5 266.5)" fill="#1c1c1c"/><ellipse cx="281.2" cy="266.5" rx="9.2" ry="10.6" transform="rotate(-12 281.2 266.5)" fill="url(#hub2)"/>
<ellipse cx="280.8" cy="266.8" rx="3" ry="3.4" fill="#2b2b2b"/>
<path d="M271,257 C274,252 281,250 288,253" stroke="#3c3c3c" stroke-width="2" fill="none"/>
<circle cx="289" cy="286.7" r="2.7" fill="#8c6a38"/>
<line x1="287.2" y1="287.6" x2="290.8" y2="285.8" stroke="#2a1c0c" stroke-width="0.8"/>
<!-- hooks -->
<g>
<path d="M289.5,229.5 l3,0.5 l0.5,4 l-2,3 l-2,-1 z" fill="#4a4a4a"/>
<path d="M326.5,247 l3,0.5 l0.5,4.5 l-2,3 l-2,-1 z" fill="#4a4a4a"/>
<path d="M280.6,235 C279.6,231.5 282.5,229.5 285.3,230.4 C288,231.4 288.3,234.6 286.6,236.6 L290.4,238.6 L290.8,242 L287.6,238.8 L282.4,237.8 Z" fill="#eeeeee"/>
<circle cx="283.9" cy="233.6" r="1.1" fill="#333"/>
<path d="M317.4,254.5 C316.4,251 319.3,249 322.1,249.9 C324.8,250.9 325.1,254.1 323.4,256.1 L327.2,258.1 L327.6,262 L324.4,258.3 L319.2,257.3 Z" fill="#eeeeee"/>
<circle cx="320.7" cy="253.1" r="1.1" fill="#333"/>
</g>
<!-- front edge highlight -->
<line x1="351.3" y1="208.6" x2="351.4" y2="271.4" stroke="#d9d9d9" stroke-width="1"/>

</g>
</svg>
<div id="title" class="abs"><div id="ticon"></div></div>
<div id="menu" class="abs"></div>
<div id="menustrip" class="abs"></div>
<div id="vtop" class="abs"></div>
<div id="ltool" class="abs"></div>
<div id="lborder" class="abs"></div>
<div class="btn" style="left:20.4px;top:21px;width:8.8px;height:9.3px;"></div>
<div class="btn" style="left:35.4px;top:21px;width:47.6px;height:9.3px;"></div>
<div class="btn" style="left:88.8px;top:21px;width:9.8px;height:9.3px;"></div>
<div class="btn" style="left:103.9px;top:21px;width:39.7px;height:9.3px;"></div>
<div class="btn" style="left:155.5px;top:21px;width:11px;height:9.3px;"></div>
<div class="btn" style="left:629px;top:21.3px;width:43.5px;height:9.4px;"></div>
<div id="stats" class="abs">
</div>
<div id="bstrip" class="abs"></div>
<div id="bline" class="abs"></div>
<div class="tab" style="left:0;width:18.7px;"></div>
<div class="tab" style="left:18.7px;width:8.1px;background:#303030;"></div>
<div class="tab" style="left:26.8px;width:23.2px;"></div>
<div class="tab" style="left:50px;width:8px;background:#303030;"></div>
<div class="tab" style="left:58px;width:47px;"></div>
<div class="tab" style="left:105px;width:5px;background:#303030;"></div>
<div class="tab" style="left:110px;width:54px;"></div>
<div class="tab" style="left:164px;width:5.3px;background:#303030;"></div>
<div class="tab" style="left:169.3px;width:39.5px;background:#505050;"></div>
<div class="tab" style="left:660.7px;width:12.3px;background:#565656;"></div>
<div class="abs" style="left:24.3px;top:483.2px;width:10.7px;height:7.8px;background:#3c3c3c;box-shadow:inset 0 0 0 0.6px #555;"></div>
<svg class="abs" style="left:0;top:0" width="673" height="500" viewBox="0 0 673 500">
<!-- title icon glyph -->
<path d="M2,2 h3 v2.2 h-3 z" fill="#e8efe6"/><rect x="1.5" y="5.1" width="4" height="1.1" fill="#b7d08c"/>
<!-- grip -->
<line x1="1.5" y1="22.6" x2="14.5" y2="22.6" stroke="#333" stroke-width="0.8" stroke-dasharray="1 0.8"/>
<!-- frame select -->
<g stroke="#d3dcdc" stroke-width="1" fill="none">
<path d="M3.2,33 V30.9 H5.6 M11,30.9 H13.3 V33 M13.3,39 V41.1 H11 M5.6,41.1 H3.2 V39"/>
</g>
<polygon points="8.3,32.2 11.8,34 11.8,38 8.3,40 4.8,38 4.8,34" fill="#5f7d84"/>
<polygon points="8.3,32.2 11.8,34 8.3,35.9 4.8,34" fill="#7a979c"/>
<!-- arrow -->
<polygon points="6,46.6 6,54.4 7.9,52.6 9.3,55.2 10.5,54.6 9.2,52.1 11.8,52.1" fill="#6f888c"/>
<!-- move -->
<rect x="1.8" y="57.4" width="12.6" height="13.8" rx="1.3" fill="#1a1a1a"/>
<g fill="#c9dced">
<polygon points="7.8,59.6 9.5,61.8 6.1,61.8"/><polygon points="7.8,70.2 9.5,68 6.1,68"/>
<polygon points="2.6,64.9 4.8,63.2 4.8,66.6"/><polygon points="13,64.9 10.8,63.2 10.8,66.6"/>
</g>
<g stroke="#e0a838" stroke-width="1"><line x1="7.8" y1="61.6" x2="7.8" y2="68.2"/><line x1="4.6" y1="64.9" x2="11" y2="64.9"/></g>
<circle cx="7.8" cy="64.9" r="1.5" fill="#f08a18"/>
<polygon points="12.6,70.6 14,70.6 14,69.2" fill="#bbb"/>
<!-- rotate -->
<circle cx="7.9" cy="79.4" r="3.2" fill="none" stroke="#ccd5d6" stroke-width="1.2"/>
<circle cx="7.9" cy="79.4" r="1.2" fill="#8fa5a8"/>
<polygon points="10.6,83.6 12.2,83.6 12.2,82" fill="#ddd"/>
<!-- scale -->
<rect x="4.3" y="89.5" width="7.1" height="7.5" fill="#6d8b90"/>
<rect x="5.2" y="92.8" width="3" height="3.2" fill="#9db4b8"/>
<path d="M7.6,93.2 L10.6,90.4 M8.8,90.3 H10.7 V92.2" stroke="#c9d6d8" stroke-width="0.7" fill="none"/>
<!-- magnet -->
<path d="M5.4,111.8 V108.6 a2.85,2.85 0 0 1 5.7,0 V111.8" stroke="#c2c2c2" stroke-width="1.5" fill="none"/>
<polygon points="11.6,113.2 13,113.2 13,111.8" fill="#ccc"/>
<!-- pause -->
<rect x="1.8" y="116.8" width="12.6" height="11.7" rx="1" fill="#141414"/>
<rect x="5" y="118.6" width="2.3" height="7.9" fill="#b0bec0"/><rect x="8.8" y="118.6" width="2.3" height="7.9" fill="#b0bec0"/>
<!-- stop -->
<rect x="4.6" y="133.8" width="6.8" height="6.9" fill="#66858a"/>
<!-- settings sliders -->
<g stroke="#cfcfcf" stroke-width="0.7"><line x1="22.2" y1="23.5" x2="27.6" y2="23.5"/><line x1="22.2" y1="25.6" x2="27.6" y2="25.6"/><line x1="22.2" y1="27.7" x2="27.6" y2="27.7"/></g>
<g fill="#e6e6e6"><rect x="25.2" y="22.7" width="1.1" height="1.6"/><rect x="23.2" y="24.8" width="1.1" height="1.6"/><rect x="25.6" y="26.9" width="1.1" height="1.6"/></g>
<polygon points="28.2,30.1 29.4,30.1 29.4,28.9" fill="#ccc"/>
<!-- bulb -->
<path d="M38.6,27 C36.6,25.6 36.9,22.4 39.7,22.3 C42.5,22.4 42.8,25.6 40.8,27 Z" fill="none" stroke="#d8d8d8" stroke-width="0.7"/>
<rect x="38.7" y="27.4" width="2" height="1.6" fill="#cfcfcf"/>
<polygon points="82,30.1 83.2,30.1 83.2,28.9" fill="#ccc"/>
<!-- eye -->
<path d="M89.6,26 C91.2,23 95.2,23 96.9,26 C95.2,28.6 91.2,28.6 89.6,26 Z" fill="none" stroke="#c8c8c8" stroke-width="0.7"/>
<circle cx="93.3" cy="25.8" r="1.2" fill="#d8d8d8"/>
<path d="M90.2,24.2 L95.8,22.6" stroke="#aaa" stroke-width="0.5"/>
<polygon points="97,30.1 98.2,30.1 98.2,28.9" fill="#ccc"/>
<!-- camera -->
<rect x="104.9" y="25.3" width="5.6" height="3.6" fill="#e8e8e8"/>
<circle cx="106.4" cy="23.5" r="1.15" fill="#e8e8e8"/><circle cx="109.2" cy="23.5" r="1.15" fill="#e8e8e8"/>
<polygon points="110.5,26.4 111.8,25.6 111.8,28.6 110.5,27.8" fill="#e8e8e8"/>
<polygon points="142,30.1 143.2,30.1 143.2,28.9" fill="#ccc"/>
<!-- chevrons -->
<path d="M145.6,22.2 L148.2,25.6 L145.6,29 M147.2,22.2 L149.8,25.6 L147.2,29" stroke="#3c3c3c" stroke-width="0.9" fill="none"/>
<!-- 0.0 -->
<ellipse cx="158.1" cy="25.7" rx="1.2" ry="2.3" fill="none" stroke="#cdd3ea" stroke-width="0.8"/>
<ellipse cx="163.8" cy="25.7" rx="1.2" ry="2.3" fill="none" stroke="#cdd3ea" stroke-width="0.8"/>
<circle cx="161" cy="25.8" r="1.15" fill="#e4e8f6"/>
<polygon points="165.2,30.1 166.4,30.1 166.4,28.9" fill="#ccc"/>
<!-- sun -->
<g stroke="#e9cf3a" stroke-width="0.8"><line x1="635.3" y1="22.1" x2="635.3" y2="29.9"/><line x1="631.4" y1="26" x2="639.2" y2="26"/><line x1="632.5" y1="23.2" x2="638.1" y2="28.8"/><line x1="632.5" y1="28.8" x2="638.1" y2="23.2"/></g>
<circle cx="635.3" cy="26" r="2.2" fill="#f6e04a" stroke="#2a2a2a" stroke-width="0.4"/>
<polygon points="670.8,30.5 672,30.5 672,29.3" fill="#ccc"/>
<!-- axis gizmo -->
<g stroke-width="0.8" fill="none"><line x1="30.8" y1="476.2" x2="30.8" y2="468.6" stroke="#4a7fd0"/><line x1="30.8" y1="476.2" x2="34.8" y2="474" stroke="#5aa84a"/><line x1="30.8" y1="476.2" x2="34.6" y2="479" stroke="#d04a3a"/></g>
<g font-family="Liberation Sans, sans-serif" font-size="3.2" font-weight="bold"><text x="29.8" y="468.2" fill="#4a7fd0">Z</text><text x="35" y="474.6" fill="#5aa84a">Y</text><text x="34.8" y="481.2" fill="#d04a3a">X</text></g>
<g font-family="Liberation Sans, sans-serif" style="font-family:'Liberation Sans',sans-serif" opacity="0.99">
<text x="8.5" y="5.9" font-size="4.53" fill="#303030" textLength="211.3" lengthAdjust="spacingAndGlyphs">Isaac Sim Full 5.0.0 - C:/Users/ftz-automation/Downloads/Simulation_mvp/isaac_sim/controller_demo.usd*</text>
<text x="3" y="14.5" font-size="4.71" font-weight="bold" fill="#dcdcdc" textLength="117.4" lengthAdjust="spacingAndGlyphs">File Edit Create Window Tools Utilities Layouts Help</text>
<g font-size="4.45" font-weight="bold" fill="#dcdcdc">
<text x="47.2" y="27.6" textLength="33.7" lengthAdjust="spacingAndGlyphs">RTX - Real-Time</text>
<text x="116" y="27.6" textLength="24.9" lengthAdjust="spacingAndGlyphs">Perspective</text>
<text x="644.7" y="27.4" textLength="26.6" lengthAdjust="spacingAndGlyphs">Stage Lights</text>
</g>
<g font-size="4.62" fill="#e0e0e0" text-anchor="end">
<text x="668.5" y="41.4">FPS: 20.71, Frame time: 48.29 ms</text>
<text x="668.5" y="48.6">NVIDIA GeForce RTX 4080: 4.2 GiB used, 10.7 GiB available</text>
<text x="668.5" y="56">Process Memory: 11.4 GiB used, 37.2 GiB available</text>
<text x="668.5" y="63.2">1280x720</text>
</g>
<g font-size="4.5" fill="#b4b4b4">
<text x="2.7" y="500.9">Console</text><text x="31.2" y="500.9">Content</text><text x="61.2" y="500.9" textLength="39.4" lengthAdjust="spacingAndGlyphs">Robotics Examples</text><text x="113" y="500.9" textLength="46" lengthAdjust="spacingAndGlyphs">Physics Demo Scenes</text><text x="172.4" y="500.9" fill="#ececec" textLength="32.3" lengthAdjust="spacingAndGlyphs">Action Graph</text><text x="662.3" y="501" fill="#e0e0e0">Property</text>
<text x="27.1" y="488.8" font-size="5" font-weight="bold" fill="#efefef">m</text>
</g>
</g>
</svg>

</body></html>
